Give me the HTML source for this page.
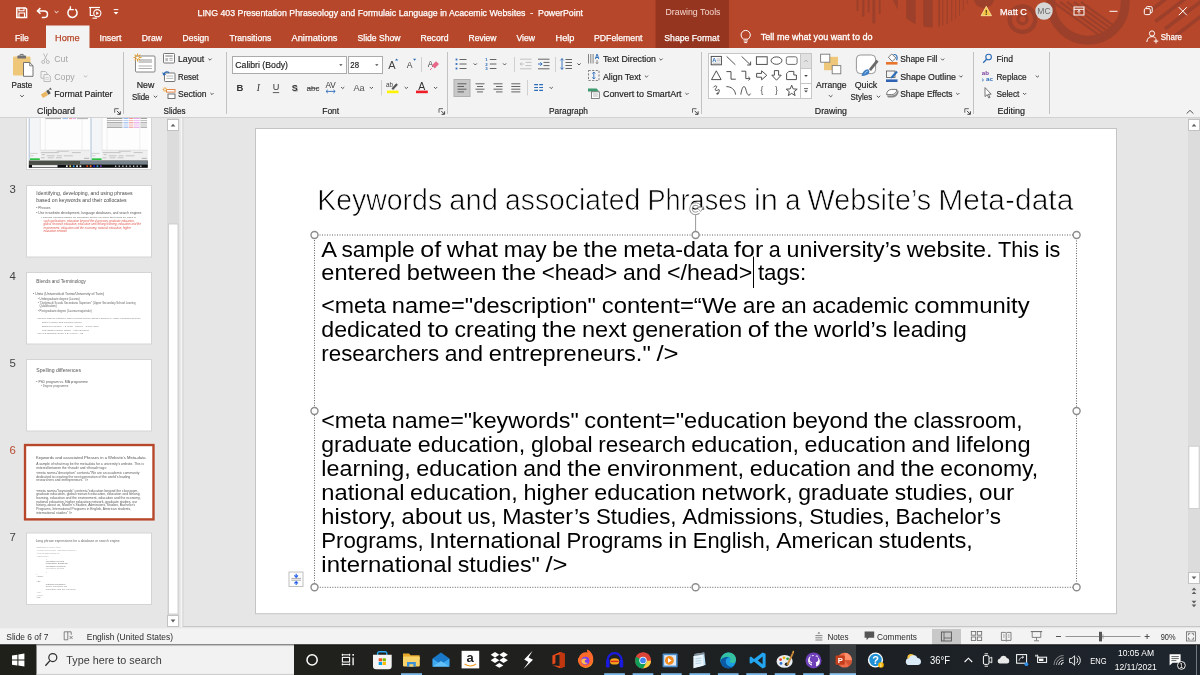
<!DOCTYPE html>
<html lang="en">
<head>
<meta charset="utf-8">
<title>LING 403 Presentation Phraseology and Formulaic Language in Acacemic Websites - PowerPoint</title>
<style>
html,body{margin:0;padding:0;background:#e6e6e6;overflow:hidden}
body{width:1200px;height:675px;position:relative;font-family:'Liberation Sans', sans-serif}
#app{position:absolute;left:0;top:0;width:1200px;height:675px;overflow:hidden;background:#e6e6e6}
svg{position:absolute;left:0;top:0;display:block;will-change:transform}
svg text{font-family:'Liberation Sans', sans-serif;white-space:pre}
</style>
</head>
<body>
<div id="app">
<svg width="1200" height="675" viewBox="0 0 1200 675">
<g id="titlebar" >
<rect x="0" y="0" width="1200" height="48" fill="#b7472a" />
<g id="pattern">
<clipPath id="cpTitle"><rect x="0" y="0" width="1200" height="48"/></clipPath>
<g clip-path="url(#cpTitle)">
<rect x="856.5" y="0" width="2" height="11" fill="#9c402b"/>
<rect x="862.0999999999999" y="0" width="2.4" height="16.7" fill="#9c402b"/>
<rect x="867.7" y="0" width="2" height="12.5" fill="#9c402b"/>
<rect x="872.3" y="0" width="3" height="23.3" fill="#9c402b"/>
<rect x="878.7" y="0" width="2" height="14" fill="#9c402b"/>
<path d="M893,0 h4.8 v10 z" fill="#9c402b"/>
<path d="M906.2,0 h9.5 v24.5 l-9.5,-6 z" fill="#9c402b"/>
<path d="M923.2,0 h9.5 v27.5 q-5,0 -9.5,-1.2 z" fill="#9c402b"/>
<rect x="938.3" y="0" width="1.7" height="26.5" fill="#9c402b"/>
<rect x="942.2" y="0" width="1.1" height="25.5" fill="#9c402b"/>
<rect x="946.5" y="0" width="1.3" height="24" fill="#9c402b"/>
<rect x="951.2" y="0" width="1.1" height="21.5" fill="#9c402b"/>
<rect x="955.2" y="0" width="0.9" height="19" fill="#9c402b"/>
<rect x="959" y="0" width="1.0" height="15.5" fill="#9c402b"/>
<rect x="962.8" y="0" width="1.0" height="10.5" fill="#9c402b"/>
<rect x="966.8" y="0" width="0.8" height="4" fill="#9c402b"/>
<circle cx="984" cy="-2" r="10.2" fill="#9c402b"/>
<circle cx="1022.5" cy="19.2" r="12.8" fill="none" stroke="#9c402b" stroke-width="4.4"/>
<circle cx="1022.5" cy="19.2" r="4.6" fill="none" stroke="#9c402b" stroke-width="3.2"/>
<circle cx="1088" cy="3" r="37.2" fill="none" stroke="#9c402b" stroke-width="9"/>
<clipPath id="cpRing"><circle cx="1088" cy="3" r="33"/></clipPath>
<g clip-path="url(#cpRing)" stroke="#9c402b" stroke-width="2.3">
<line x1="1053.0" y1="2" x2="1098.0" y2="34.4"/>
<line x1="1060.0" y1="2" x2="1105.0" y2="34.4"/>
<line x1="1067.0" y1="2" x2="1112.0" y2="34.4"/>
<line x1="1074.0" y1="2" x2="1119.0" y2="34.4"/>
<line x1="1081.0" y1="2" x2="1126.0" y2="34.4"/>
</g>
<g stroke="#9c402b" stroke-width="3.6">
<line x1="1146.0" y1="14.0" x2="1206.0" y2="-32.0"/>
<line x1="1155.5" y1="21.5" x2="1215.5" y2="-24.5"/>
<line x1="1165.0" y1="29.0" x2="1225.0" y2="-17.0"/>
<line x1="1174.5" y1="36.5" x2="1234.5" y2="-9.5"/>
</g>
</g></g>
<rect x="655.5" y="0" width="73.5" height="48" fill="#96351f" />
<rect x="46" y="25.5" width="43.5" height="22.5" fill="#f3f3f3" />
<path d="M16.8,7.9 h8.6 l1.2,1.2 v8.4 h-9.8 z" fill="none" stroke="#ffffff" stroke-width="1.5" />
<path d="M19,7.5 v3.2 h5 v-3.2" fill="none" stroke="#ffffff" stroke-width="1.1" />
<rect x="19" y="13" width="5.5" height="4.5" fill="none" stroke="#ffffff" stroke-width="1.1" />
<path d="M40.4,8 l-2.9,3 l3,2.7" fill="none" stroke="#ffffff" stroke-width="1.5" />
<path d="M37.8,11 h6.4 a3.3,3.3 0 0 1 0,6.6 h-2.4" fill="none" stroke="#ffffff" stroke-width="1.5" />
<path d="M54.7,11.1 L56.5,12.9 L58.3,11.1" fill="none" stroke="#ffffff" stroke-width="1" />
<path d="M75.3,9.2 a4.6,4.6 0 1 1 -5.2,-0.3" fill="none" stroke="#ffffff" stroke-width="1.5" />
<path d="M70.4,6.2 v3.4 h3.4" fill="none" stroke="#ffffff" stroke-width="1.3" />
<path d="M89,7.5 h11" fill="none" stroke="#ffffff" stroke-width="1.2" />
<path d="M90.3,7.5 v8 h3.2" fill="none" stroke="#ffffff" stroke-width="1.2" />
<circle cx="97.3" cy="13.2" r="3.6" fill="none" stroke="#ffffff" stroke-width="1.1" />
<path d="M96.2,11.4 l2.8,1.8 l-2.8,1.8 z" fill="#ffffff" />
<path d="M92.5,18.2 h4.5" fill="none" stroke="#ffffff" stroke-width="1.1" />
<path d="M113.7,9.6 h4.6" fill="none" stroke="#ffffff" stroke-width="1" />
<path d="M113.6,12 l2.4,2.4 l2.4,-2.4 z" fill="#ffffff" />
<text x="197.5" y="16.3" font-size="9.0" fill="#ffffff" textLength="385.5" lengthAdjust="spacingAndGlyphs" stroke="#ffffff" stroke-width="0.25" >LING 403 Presentation Phraseology and Formulaic Language in Acacemic Websites  -  PowerPoint</text>
<text x="665.5" y="15.3" font-size="9.0" fill="#f3d6cd" textLength="55.0" lengthAdjust="spacingAndGlyphs" >Drawing Tools</text>
<path d="M986.3,6.3 l5.2,9.4 h-10.4 z" fill="#f6c443" stroke="#fbe7a9" stroke-width="0.8" />
<text x="986.3" y="14.6" font-size="7.5" fill="#3b2a10" font-weight="bold" text-anchor="middle" >!</text>
<text x="1000" y="15.3" font-size="9.6" fill="#ffffff" textLength="26.8" lengthAdjust="spacingAndGlyphs" stroke="#ffffff" stroke-width="0.25" >Matt C</text>
<circle cx="1044" cy="11" r="8.7" fill="#d6d6d6" />
<text x="1044" y="14.4" font-size="8.6" fill="#6a6a6a" text-anchor="middle" >MC</text>
<rect x="1074" y="7" width="10" height="8" fill="none" stroke="#ffffff" stroke-width="1" />
<path d="M1074,9.3 h10" fill="none" stroke="#ffffff" stroke-width="1" />
<path d="M1079,13.6 v-3 M1077.4,11.8 l1.6,-1.5 l1.6,1.5" fill="none" stroke="#ffffff" stroke-width="0.9" />
<path d="M1109.5,11.3 h8" fill="none" stroke="#ffffff" stroke-width="1" />
<rect x="1144.3" y="8.6" width="6" height="6" fill="none" stroke="#ffffff" stroke-width="1" rx="1.3" />
<path d="M1146.2,8.4 v-0.6 a1.2,1.2 0 0 1 1.2,-1.2 h3.4 a1.4,1.4 0 0 1 1.4,1.4 v3.6 a1.2,1.2 0 0 1 -1.2,1.2 h-0.6" fill="none" stroke="#ffffff" stroke-width="1" />
<path d="M1178.8,7.2 l8,8 M1186.8,7.2 l-8,8" fill="none" stroke="#ffffff" stroke-width="1" />
</g>
<g id="tabs" >
<text x="15" y="40.6" font-size="9.0" fill="#ffffff" textLength="13.8" lengthAdjust="spacingAndGlyphs" stroke="#ffffff" stroke-width="0.25" >File</text>
<text x="99.5" y="40.6" font-size="9.0" fill="#ffffff" textLength="22.0" lengthAdjust="spacingAndGlyphs" stroke="#ffffff" stroke-width="0.25" >Insert</text>
<text x="141.8" y="40.6" font-size="9.0" fill="#ffffff" textLength="20.2" lengthAdjust="spacingAndGlyphs" stroke="#ffffff" stroke-width="0.25" >Draw</text>
<text x="182.5" y="40.6" font-size="9.0" fill="#ffffff" textLength="26.5" lengthAdjust="spacingAndGlyphs" stroke="#ffffff" stroke-width="0.25" >Design</text>
<text x="229.5" y="40.6" font-size="9.0" fill="#ffffff" textLength="41.8" lengthAdjust="spacingAndGlyphs" stroke="#ffffff" stroke-width="0.25" >Transitions</text>
<text x="291.5" y="40.6" font-size="9.0" fill="#ffffff" textLength="46.0" lengthAdjust="spacingAndGlyphs" stroke="#ffffff" stroke-width="0.25" >Animations</text>
<text x="357.5" y="40.6" font-size="9.0" fill="#ffffff" textLength="43.0" lengthAdjust="spacingAndGlyphs" stroke="#ffffff" stroke-width="0.25" >Slide Show</text>
<text x="420.5" y="40.6" font-size="9.0" fill="#ffffff" textLength="28.0" lengthAdjust="spacingAndGlyphs" stroke="#ffffff" stroke-width="0.25" >Record</text>
<text x="468.5" y="40.6" font-size="9.0" fill="#ffffff" textLength="28.0" lengthAdjust="spacingAndGlyphs" stroke="#ffffff" stroke-width="0.25" >Review</text>
<text x="516.5" y="40.6" font-size="9.0" fill="#ffffff" textLength="18.5" lengthAdjust="spacingAndGlyphs" stroke="#ffffff" stroke-width="0.25" >View</text>
<text x="555.5" y="40.6" font-size="9.0" fill="#ffffff" textLength="19.0" lengthAdjust="spacingAndGlyphs" stroke="#ffffff" stroke-width="0.25" >Help</text>
<text x="594" y="40.6" font-size="9.0" fill="#ffffff" textLength="48.5" lengthAdjust="spacingAndGlyphs" stroke="#ffffff" stroke-width="0.25" >PDFelement</text>
<text x="664.3" y="40.6" font-size="9.0" fill="#ffffff" textLength="55.0" lengthAdjust="spacingAndGlyphs" stroke="#ffffff" stroke-width="0.25" >Shape Format</text>
<text x="55" y="40.6" font-size="9.0" fill="#b7472a" textLength="24.5" lengthAdjust="spacingAndGlyphs" stroke="#b7472a" stroke-width="0.25" >Home</text>
<path d="M743.4,39.2 c-1.6,-1.6 -2.3,-2.6 -2.3,-4.2 a4.6,4.6 0 0 1 9.2,0 c0,1.6 -0.7,2.6 -2.3,4.2 z" fill="none" stroke="#ffffff" stroke-width="1" />
<path d="M743.6,41 h4.2 M744.3,42.6 h2.8" fill="none" stroke="#ffffff" stroke-width="1" />
<text x="760.8" y="40.4" font-size="9.0" fill="#ffffff" textLength="111.7" lengthAdjust="spacingAndGlyphs" stroke="#ffffff" stroke-width="0.3" >Tell me what you want to do</text>
<circle cx="1152" cy="33.5" r="2.6" fill="none" stroke="#ffffff" stroke-width="1" />
<path d="M1146.8,42 c0.3,-3.6 2.4,-5.4 5.2,-5.4 c1.6,0 2.9,0.6 3.8,1.7" fill="none" stroke="#ffffff" stroke-width="1" />
<path d="M1156,38.8 v4.6 M1153.7,41.1 h4.6" fill="none" stroke="#ffffff" stroke-width="1" />
<text x="1160.8" y="40.4" font-size="9.0" fill="#ffffff" textLength="21.2" lengthAdjust="spacingAndGlyphs" stroke="#ffffff" stroke-width="0.25" >Share</text>
</g>
<g id="ribbon" >
<rect x="0" y="48" width="1200" height="69" fill="#f3f3f3" />
<line x1="0" y1="117.5" x2="1200" y2="117.5" stroke="#d2d2d2" stroke-width="1" />
<line x1="123.5" y1="52" x2="123.5" y2="114" stroke="#c2c2c2" stroke-width="1" />
<line x1="226.5" y1="52" x2="226.5" y2="114" stroke="#c2c2c2" stroke-width="1" />
<line x1="447.5" y1="52" x2="447.5" y2="114" stroke="#c2c2c2" stroke-width="1" />
<line x1="701.5" y1="52" x2="701.5" y2="114" stroke="#c2c2c2" stroke-width="1" />
<line x1="973.5" y1="52" x2="973.5" y2="114" stroke="#c2c2c2" stroke-width="1" />
<line x1="1049.5" y1="52" x2="1049.5" y2="114" stroke="#c2c2c2" stroke-width="1" />
<path d="M114.7,112.7 v-4 h4" fill="none" stroke="#555" stroke-width="0.9" />
<path d="M116.9,110.9 l3.2,3.2 M120.3,111.3 v3 h-3" fill="none" stroke="#444" stroke-width="1" />
<path d="M439.0,112.7 v-4 h4" fill="none" stroke="#555" stroke-width="0.9" />
<path d="M441.2,110.9 l3.2,3.2 M444.6,111.3 v3 h-3" fill="none" stroke="#444" stroke-width="1" />
<path d="M692.5,112.7 v-4 h4" fill="none" stroke="#555" stroke-width="0.9" />
<path d="M694.6999999999999,110.9 l3.2,3.2 M698.0999999999999,111.3 v3 h-3" fill="none" stroke="#444" stroke-width="1" />
<path d="M964.8000000000001,112.7 v-4 h4" fill="none" stroke="#555" stroke-width="0.9" />
<path d="M967.0,110.9 l3.2,3.2 M970.4,111.3 v3 h-3" fill="none" stroke="#444" stroke-width="1" />
<rect x="13" y="56.5" width="17.5" height="19" fill="#efc77a" stroke="none" stroke-width="0" rx="1.2" />
<rect x="17.4" y="55.6" width="8.6" height="3" fill="#707070" stroke="none" stroke-width="0" rx="0.6" />
<path d="M20.2,55.6 v-1.2 h3 v1.2" fill="none" stroke="#707070" stroke-width="1" />
<path d="M23.5,62.5 h6.2 l3.3,3.3 v10.5 h-9.5 z" fill="#fff" stroke="#666" stroke-width="0.9" />
<path d="M29.7,62.5 v3.3 h3.3" fill="none" stroke="#666" stroke-width="0.8" />
<text x="11.5" y="87.5" font-size="9.0" fill="#1f1f1f" textLength="20.7" lengthAdjust="spacingAndGlyphs" stroke="#1f1f1f" stroke-width="0.18" >Paste</text>
<path d="M20.2,95.1 L22,96.9 L23.8,95.1" fill="none" stroke="#444" stroke-width="0.9" />
<path d="M43.5,53.5 l3.6,7.2 M47.5,53.5 l-3.6,7.2" fill="none" stroke="#b5b5b5" stroke-width="0.9" />
<circle cx="43.2" cy="62" r="1.5" fill="none" stroke="#b5b5b5" stroke-width="0.9" />
<circle cx="47.8" cy="62" r="1.5" fill="none" stroke="#b5b5b5" stroke-width="0.9" />
<text x="54.2" y="62.3" font-size="9.0" fill="#a6a6a6" textLength="13.8" lengthAdjust="spacingAndGlyphs" >Cut</text>
<path d="M41,71.5 h4.5 l1.5,1.5 v5.2 h-6 z" fill="#f3f3f3" stroke="#b5b5b5" stroke-width="0.9" />
<path d="M44,74.5 h4.5 l1.8,1.8 v5.2 h-6.3 z" fill="#f3f3f3" stroke="#b5b5b5" stroke-width="0.9" />
<path d="M45.3,77.5 h3.6 M45.3,79.3 h3.6" fill="none" stroke="#c5c5c5" stroke-width="0.7" />
<text x="54.2" y="79.5" font-size="9.0" fill="#a6a6a6" textLength="20.6" lengthAdjust="spacingAndGlyphs" >Copy</text>
<path d="M83.9,75.5 L85.5,77.1 L87.1,75.5" fill="none" stroke="#b0b0b0" stroke-width="0.9" />
<path d="M40.8,94.5 l5.2,-3.2 l2.2,3.6 l-5.2,3.2 z" fill="#e9b763" />
<path d="M46.2,91 l2.2,-1.4 l2.3,3.7 l-2.2,1.4 z" fill="#555" />
<path d="M48.8,89.4 l1.6,-2 l1.5,2.3 z" fill="#555" />
<text x="54.2" y="96.7" font-size="9.0" fill="#1f1f1f" textLength="58.3" lengthAdjust="spacingAndGlyphs" stroke="#1f1f1f" stroke-width="0.18" >Format Painter</text>
<text x="37" y="114.1" font-size="9.0" fill="#1f1f1f" textLength="38" lengthAdjust="spacingAndGlyphs" stroke="#1f1f1f" stroke-width="0.18" >Clipboard</text>
<rect x="135.5" y="56" width="19.5" height="16" fill="#fff" stroke="#777" stroke-width="0.9" rx="1" />
<rect x="138.5" y="59" width="13.5" height="4" fill="#c9c9c9" />
<path d="M138.5,66 h13.5 M138.5,68.5 h13.5" fill="none" stroke="#9a9a9a" stroke-width="0.8" />
<g stroke="#e8a33a" stroke-width="1.1">
<line x1="137.50" y1="56.20" x2="137.50" y2="53.50"/>
<line x1="138.41" y1="56.59" x2="140.30" y2="54.70"/>
<line x1="138.80" y1="57.50" x2="141.50" y2="57.50"/>
<line x1="138.41" y1="58.41" x2="140.30" y2="60.30"/>
<line x1="137.50" y1="58.80" x2="137.50" y2="61.50"/>
<line x1="136.59" y1="58.41" x2="134.70" y2="60.30"/>
<line x1="136.20" y1="57.50" x2="133.50" y2="57.50"/>
<line x1="136.59" y1="56.59" x2="134.70" y2="54.70"/>
</g>
<text x="136.7" y="87.5" font-size="9.0" fill="#1f1f1f" textLength="17.6" lengthAdjust="spacingAndGlyphs" stroke="#1f1f1f" stroke-width="0.18" >New</text>
<text x="132" y="99.6" font-size="9.0" fill="#1f1f1f" textLength="17.5" lengthAdjust="spacingAndGlyphs" stroke="#1f1f1f" stroke-width="0.18" >Slide</text>
<path d="M153.8,95.75 L155.5,97.44999999999999 L157.2,95.75" fill="none" stroke="#444" stroke-width="0.9" />
<rect x="163.5" y="53.5" width="11" height="9.5" fill="#fff" stroke="#666" stroke-width="0.9" rx="0.8" />
<path d="M165.3,56 h7.4" fill="none" stroke="#666" stroke-width="0.9" />
<rect x="165.3" y="58" width="2.8" height="3.2" fill="#bdbdbd" />
<path d="M169.3,58.4 h3.4 M169.3,60.2 h3.4" fill="none" stroke="#888" stroke-width="0.7" />
<text x="178" y="62.3" font-size="9.0" fill="#1f1f1f" textLength="26.2" lengthAdjust="spacingAndGlyphs" stroke="#1f1f1f" stroke-width="0.18" >Layout</text>
<path d="M208.4,58.6 L210,60.199999999999996 L211.6,58.6" fill="none" stroke="#444" stroke-width="0.9" />
<rect x="164.5" y="73" width="10.5" height="8.5" fill="#fff" stroke="#666" stroke-width="0.9" rx="0.8" />
<path d="M166.3,76 h7 M166.3,78.4 h7" fill="none" stroke="#999" stroke-width="0.7" />
<path d="M163.6,74.8 a3.3,3.3 0 0 1 5.5,-2" fill="none" stroke="#2b6cb8" stroke-width="1.2" />
<path d="M162.2,72.3 l1,3.3 l3.2,-1 z" fill="#2b6cb8" />
<text x="178" y="79.5" font-size="9.0" fill="#1f1f1f" textLength="20.5" lengthAdjust="spacingAndGlyphs" stroke="#1f1f1f" stroke-width="0.18" >Reset</text>
<rect x="166.5" y="89.5" width="8.5" height="2.6" fill="#fff" stroke="#e07b39" stroke-width="0.9" />
<rect x="168" y="94" width="7" height="4.5" fill="#fff" stroke="#666" stroke-width="0.9" />
<g stroke="#e8a33a" stroke-width="0.9">
<line x1="165.00" y1="88.70" x2="165.00" y2="87.10"/>
<line x1="165.56" y1="88.94" x2="166.68" y2="87.82"/>
<line x1="165.80" y1="89.50" x2="167.40" y2="89.50"/>
<line x1="165.56" y1="90.06" x2="166.68" y2="91.18"/>
<line x1="165.00" y1="90.30" x2="165.00" y2="91.90"/>
<line x1="164.44" y1="90.06" x2="163.32" y2="91.18"/>
<line x1="164.20" y1="89.50" x2="162.60" y2="89.50"/>
<line x1="164.44" y1="88.94" x2="163.32" y2="87.82"/>
</g>
<text x="178" y="96.7" font-size="9.0" fill="#1f1f1f" textLength="28.6" lengthAdjust="spacingAndGlyphs" stroke="#1f1f1f" stroke-width="0.18" >Section</text>
<path d="M210.4,93.0 L212,94.6 L213.6,93.0" fill="none" stroke="#444" stroke-width="0.9" />
<text x="163.5" y="114.1" font-size="9.0" fill="#1f1f1f" textLength="22.0" lengthAdjust="spacingAndGlyphs" stroke="#1f1f1f" stroke-width="0.18" >Slides</text>
<rect x="232.5" y="56.5" width="114" height="17" fill="#fff" stroke="#ababab" stroke-width="1" />
<text x="235.3" y="67.8" font-size="9.0" fill="#1f1f1f" textLength="52.7" lengthAdjust="spacingAndGlyphs" stroke="#1f1f1f" stroke-width="0.18" >Calibri (Body)</text>
<path d="M339.2,64.2 h3.4 l-1.7,1.9 z" fill="#444" />
<rect x="348.5" y="56.5" width="34" height="17" fill="#fff" stroke="#ababab" stroke-width="1" />
<text x="350.3" y="67.8" font-size="9.0" fill="#1f1f1f" textLength="8.7" lengthAdjust="spacingAndGlyphs" stroke="#1f1f1f" stroke-width="0.18" >28</text>
<path d="M375.1,64.2 h3.4 l-1.7,1.9 z" fill="#444" />
<text x="392" y="68.6" font-size="11" fill="#444" text-anchor="middle" >A</text>
<path d="M395,60.5 l1.6,-2 l1.6,2 z" fill="#2b6cb8" />
<text x="409.5" y="68.4" font-size="8.6" fill="#444" text-anchor="middle" >A</text>
<path d="M413,58.8 l1.6,2 l1.6,-2 z" fill="#2b6cb8" />
<line x1="421.5" y1="57" x2="421.5" y2="72" stroke="#d0d0d0" stroke-width="1" />
<text x="430.6" y="66.5" font-size="8.2" fill="#444" text-anchor="middle" >A</text>
<path d="M431.8,65.6 l4.2,-4.4 l3,2.8 l-4.2,4.4 z" fill="#e8688a" />
<path d="M430,70 l1.8,-1.8" fill="none" stroke="#e8688a" stroke-width="1" />
<text x="240" y="91" font-size="9.5" fill="#333" font-weight="bold" text-anchor="middle" >B</text>
<text x="258.3" y="91" font-size="9.5" fill="#333" text-anchor="middle" font-style="italic" style="font-family:'Liberation Serif', serif" >I</text>
<text x="276" y="90.4" font-size="9.2" fill="#333" text-anchor="middle" >U</text>
<path d="M272.8,92.6 h6.4" fill="none" stroke="#333" stroke-width="0.8" />
<text x="295.5" y="91.6" font-size="9" fill="#bdbdbd" font-weight="bold" text-anchor="middle" >S</text>
<text x="294.7" y="90.8" font-size="9" fill="#333" font-weight="bold" text-anchor="middle" >S</text>
<text x="313" y="90.6" font-size="8" fill="#333" text-anchor="middle" >abc</text>
<path d="M307.2,88.2 h11.6" fill="none" stroke="#333" stroke-width="0.7" />
<text x="330.6" y="88.2" font-size="8.2" fill="#333" text-anchor="middle" >AV</text>
<path d="M326.2,91.4 h8.8 M327.8,89.8 l-1.8,1.6 l1.8,1.6 M333.4,89.8 l1.8,1.6 l-1.8,1.6" fill="none" stroke="#2b6cb8" stroke-width="0.9" />
<path d="M341.09999999999997,87.0 L342.7,88.6 L344.3,87.0" fill="none" stroke="#444" stroke-width="0.9" />
<text x="359" y="90.8" font-size="9.2" fill="#555" text-anchor="middle" >Aa</text>
<path d="M369.79999999999995,87.0 L371.4,88.6 L373.0,87.0" fill="none" stroke="#444" stroke-width="0.9" />
<line x1="381.5" y1="80" x2="381.5" y2="95.5" stroke="#d0d0d0" stroke-width="1" />
<text x="389.6" y="86.6" font-size="6.4" fill="#444" text-anchor="middle" >ab</text>
<path d="M391.5,88.4 l4.8,-5.2 l1.6,1.5 l-4.8,5.2 z" fill="#555" />
<rect x="387" y="90.6" width="11.5" height="2.6" fill="#fff200" />
<path d="M404.7,87.0 L406.3,88.6 L407.90000000000003,87.0" fill="none" stroke="#444" stroke-width="0.9" />
<text x="421.8" y="89.6" font-size="10.5" fill="#333" text-anchor="middle" >A</text>
<rect x="416" y="90.6" width="11.8" height="2.6" fill="#ee1c25" />
<path d="M434.0,87.0 L435.6,88.6 L437.20000000000005,87.0" fill="none" stroke="#444" stroke-width="0.9" />
<text x="322.2" y="114.1" font-size="9.0" fill="#1f1f1f" textLength="17.0" lengthAdjust="spacingAndGlyphs" stroke="#1f1f1f" stroke-width="0.18" >Font</text>
<rect x="455.6" y="58.6" width="1.8" height="1.8" fill="#2b6cb8" />
<path d="M459.5,59.5 h7" fill="none" stroke="#555" stroke-width="0.9" />
<rect x="455.6" y="63.1" width="1.8" height="1.8" fill="#2b6cb8" />
<path d="M459.5,64 h7" fill="none" stroke="#555" stroke-width="0.9" />
<rect x="455.6" y="67.6" width="1.8" height="1.8" fill="#2b6cb8" />
<path d="M459.5,68.5 h7" fill="none" stroke="#555" stroke-width="0.9" />
<path d="M473.7,63.400000000000006 L475.3,65.0 L476.90000000000003,63.400000000000006" fill="none" stroke="#444" stroke-width="0.9" />
<text x="486.6" y="61.1" font-size="4.4" fill="#2b6cb8" font-weight="bold" text-anchor="middle" >1</text>
<path d="M489.8,59.5 h6.6" fill="none" stroke="#555" stroke-width="0.9" />
<text x="486.6" y="65.6" font-size="4.4" fill="#2b6cb8" font-weight="bold" text-anchor="middle" >2</text>
<path d="M489.8,64 h6.6" fill="none" stroke="#555" stroke-width="0.9" />
<text x="486.6" y="70.1" font-size="4.4" fill="#2b6cb8" font-weight="bold" text-anchor="middle" >3</text>
<path d="M489.8,68.5 h6.6" fill="none" stroke="#555" stroke-width="0.9" />
<path d="M503.0,63.400000000000006 L504.6,65.0 L506.20000000000005,63.400000000000006" fill="none" stroke="#444" stroke-width="0.9" />
<line x1="514.5" y1="57" x2="514.5" y2="72" stroke="#d0d0d0" stroke-width="1" />
<path d="M520,59.2 h11.5" fill="none" stroke="#bbb" stroke-width="0.9" />
<path d="M520,68.8 h11.5" fill="none" stroke="#bbb" stroke-width="0.9" />
<path d="M525.5,62.4 h6" fill="none" stroke="#bbb" stroke-width="0.9" />
<path d="M525.5,65.6 h6" fill="none" stroke="#bbb" stroke-width="0.9" />
<path d="M520,64 h4 M521.6,62.4 l-1.7,1.6 l1.7,1.6" fill="none" stroke="#bbb" stroke-width="0.9" />
<path d="M538,59.2 h11.5" fill="none" stroke="#555" stroke-width="0.9" />
<path d="M538,68.8 h11.5" fill="none" stroke="#555" stroke-width="0.9" />
<path d="M543.5,62.4 h6" fill="none" stroke="#555" stroke-width="0.9" />
<path d="M543.5,65.6 h6" fill="none" stroke="#555" stroke-width="0.9" />
<path d="M538,64 h4 M540.4,62.4 l1.7,1.6 l-1.7,1.6" fill="none" stroke="#2b6cb8" stroke-width="1" />
<line x1="555.5" y1="57" x2="555.5" y2="72" stroke="#d0d0d0" stroke-width="1" />
<path d="M565.5,59.5 h6.5" fill="none" stroke="#555" stroke-width="0.9" />
<path d="M565.5,62.5 h6.5" fill="none" stroke="#555" stroke-width="0.9" />
<path d="M565.5,65.5 h6.5" fill="none" stroke="#555" stroke-width="0.9" />
<path d="M565.5,68.5 h6.5" fill="none" stroke="#555" stroke-width="0.9" />
<path d="M562,58.6 v10.8 M560.4,60.4 l1.6,-1.8 l1.6,1.8 M560.4,67.6 l1.6,1.8 l1.6,-1.8" fill="none" stroke="#2b6cb8" stroke-width="0.9" />
<path d="M577.4,63.400000000000006 L579,65.0 L580.6,63.400000000000006" fill="none" stroke="#444" stroke-width="0.9" />
<rect x="454" y="79.5" width="16" height="17" fill="#c8c8c8" stroke="#b0b0b0" stroke-width="1" />
<path d="M457.5,83.8 h9" fill="none" stroke="#555" stroke-width="0.9" />
<path d="M457.5,86.5 h6.5" fill="none" stroke="#555" stroke-width="0.9" />
<path d="M457.5,89.2 h9" fill="none" stroke="#555" stroke-width="0.9" />
<path d="M457.5,91.9 h6.5" fill="none" stroke="#555" stroke-width="0.9" />
<path d="M475.5,83.8 h9" fill="none" stroke="#555" stroke-width="0.9" />
<path d="M477.0,86.5 h6" fill="none" stroke="#555" stroke-width="0.9" />
<path d="M475.5,89.2 h9" fill="none" stroke="#555" stroke-width="0.9" />
<path d="M477.0,91.9 h6" fill="none" stroke="#555" stroke-width="0.9" />
<path d="M493.5,83.8 h9" fill="none" stroke="#555" stroke-width="0.9" />
<path d="M496.0,86.5 h6.5" fill="none" stroke="#555" stroke-width="0.9" />
<path d="M493.5,89.2 h9" fill="none" stroke="#555" stroke-width="0.9" />
<path d="M496.0,91.9 h6.5" fill="none" stroke="#555" stroke-width="0.9" />
<path d="M511.3,83.8 h9" fill="none" stroke="#555" stroke-width="0.9" />
<path d="M511.3,86.5 h9" fill="none" stroke="#555" stroke-width="0.9" />
<path d="M511.3,89.2 h9" fill="none" stroke="#555" stroke-width="0.9" />
<path d="M511.3,91.9 h9" fill="none" stroke="#555" stroke-width="0.9" />
<line x1="527.5" y1="80" x2="527.5" y2="95.5" stroke="#d0d0d0" stroke-width="1" />
<path d="M534.2,84.6 h3.8 M539.2,84.6 h3.8" fill="none" stroke="#2b6cb8" stroke-width="1.2" />
<path d="M534.2,87.5 h3.8 M539.2,87.5 h3.8" fill="none" stroke="#2b6cb8" stroke-width="1.2" />
<path d="M534.2,90.39999999999999 h3.8 M539.2,90.39999999999999 h3.8" fill="none" stroke="#2b6cb8" stroke-width="1.2" />
<path d="M549.6,87.0 L551.2,88.6 L552.8000000000001,87.0" fill="none" stroke="#444" stroke-width="0.9" />
<path d="M588.5,54 v9.5 M590.8,54 v9.5 M593.1,54 v9.5" fill="none" stroke="#666" stroke-width="0.8" />
<text x="597" y="59" font-size="6.5" fill="#2b6cb8" font-weight="bold" text-anchor="middle" >A</text>
<path d="M597,60 v3.6 M595.8,62.4 l1.2,1.4 l1.2,-1.4" fill="none" stroke="#666" stroke-width="0.7" />
<text x="603" y="62.3" font-size="9.0" fill="#1f1f1f" textLength="53" lengthAdjust="spacingAndGlyphs" stroke="#1f1f1f" stroke-width="0.18" >Text Direction</text>
<path d="M659.4,58.6 L661,60.199999999999996 L662.6,58.6" fill="none" stroke="#444" stroke-width="0.9" />
<rect x="588.5" y="70.5" width="10.5" height="10" fill="none" stroke="#666" stroke-width="0.8" stroke-dasharray="2.2,1.4"/>
<path d="M593.8,72 v7 M592.4,73.6 l1.4,-1.6 l1.4,1.6 M592.4,77.4 l1.4,1.6 l1.4,-1.6" fill="none" stroke="#2b6cb8" stroke-width="0.9" />
<text x="603" y="79.5" font-size="9.0" fill="#1f1f1f" textLength="38" lengthAdjust="spacingAndGlyphs" stroke="#1f1f1f" stroke-width="0.18" >Align Text</text>
<path d="M644.9,75.60000000000001 L646.5,77.2 L648.1,75.60000000000001" fill="none" stroke="#444" stroke-width="0.9" />
<path d="M588,88.6 h8.6 l2.6,3 h-11.2 z" fill="#3c9a6e" />
<rect x="591.5" y="91.8" width="7.8" height="6.6" fill="#fff" stroke="#666" stroke-width="0.8" />
<path d="M593,94 h4.8 M593,96 h4.8" fill="none" stroke="#999" stroke-width="0.7" />
<text x="603" y="96.7" font-size="9.0" fill="#1f1f1f" textLength="78.6" lengthAdjust="spacingAndGlyphs" stroke="#1f1f1f" stroke-width="0.18" >Convert to SmartArt</text>
<path d="M685.4,93.0 L687,94.6 L688.6,93.0" fill="none" stroke="#444" stroke-width="0.9" />
<text x="549" y="114.1" font-size="9.0" fill="#1f1f1f" textLength="39" lengthAdjust="spacingAndGlyphs" stroke="#1f1f1f" stroke-width="0.18" >Paragraph</text>
<rect x="708.5" y="53.5" width="103" height="45" fill="#fff" stroke="#c6c6c6" stroke-width="1" />
<rect x="801" y="54" width="10" height="14.5" fill="#e1e1e1" />
<line x1="800.5" y1="54" x2="800.5" y2="98" stroke="#c6c6c6" stroke-width="1" />
<line x1="801" y1="68.5" x2="811" y2="68.5" stroke="#c6c6c6" stroke-width="1" />
<line x1="801" y1="83.5" x2="811" y2="83.5" stroke="#c6c6c6" stroke-width="1" />
<path d="M804.200,62 l1.800,-1.900 l1.800,1.900" fill="none" stroke="#b0b0b0" stroke-width="0.9" />
<path d="M804.2,75 h3.6 l-1.8,2 z" fill="#444" />
<path d="M804,88.6 h4" fill="none" stroke="#444" stroke-width="0.8" />
<path d="M804.2,90.4 h3.6 l-1.8,2 z" fill="#444" />
<rect x="711.2" y="56.4" width="10.2" height="8.4" fill="#fff" stroke="#484848" stroke-width="0.95" />
<text x="714.3" y="62" font-size="5.5" fill="#2b6cb8" font-weight="bold" text-anchor="middle" >A</text>
<path d="M716.5,59 h3.8 M716.5,60.8 h3.8 M712.6,63.2 h7.6" fill="none" stroke="#888" stroke-width="0.6" />
<path d="M726.6,56.4 l8.8,8.4" fill="none" stroke="#484848" stroke-width="0.95" />
<path d="M741.6,56.4 l8.6,8.2 M750.6,61.6 v3.4 h-3.4" fill="none" stroke="#484848" stroke-width="0.95" />
<rect x="756.4" y="56.8" width="10.8" height="7.6" fill="none" stroke="#484848" stroke-width="0.95" />
<ellipse cx="776.5" cy="60.6" rx="5.4" ry="3.7" fill="none" stroke="#484848" stroke-width="0.95"/>
<rect x="786.3" y="56.8" width="10.8" height="7.6" fill="none" stroke="#484848" stroke-width="0.8" rx="1.8" />
<path d="M716.3,70.8 l4.8,8.8 h-9.6 z" fill="none" stroke="#484848" stroke-width="0.95" />
<path d="M726.4,71.6 h4.6 v7.6 h4.8" fill="none" stroke="#484848" stroke-width="0.95" />
<path d="M741.4,71.2 h4.4 v7.4 h4 M748.4,77 l1.8,1.7 l-1.8,1.7" fill="none" stroke="#484848" stroke-width="0.95" />
<path d="M756.6,73.4 h5 v-2.6 l5.2,4.5 l-5.2,4.5 v-2.6 h-5 z" fill="none" stroke="#484848" stroke-width="0.95" />
<path d="M774.4,70.6 h4.2 v4.6 h2.6 l-4.7,5 l-4.7,-5 h2.6 z" fill="none" stroke="#484848" stroke-width="0.95" />
<path d="M786.6,79.6 v-6 l2.2,-2.2 h5 v3.6 h2.6 v4.6 z" fill="none" stroke="#484848" stroke-width="0.95" />
<path d="M713.400,87.400 c2,-2.600 4.400,-1.600 2.600,0.800 c-2.400,3 1.600,2.600 2.400,1.400 c1.200,-1 1.200,2.400 -0.600,4.600 l-0.200,-1.800 M717.800,94.200 l-1.600,-0.600" fill="none" stroke="#484848" stroke-width="0.95" />
<path d="M726.4,86.6 c5,0 8.6,3 9.2,8" fill="none" stroke="#484848" stroke-width="0.95" />
<path d="M740.8,94.6 c1.6,-10 4,-10 5.4,-4 c1.4,6 3.6,5 4.4,3" fill="none" stroke="#484848" stroke-width="0.95" />
<text x="761.8" y="93.2" font-size="8.5" fill="#484848" text-anchor="middle" >{</text>
<text x="776.5" y="93.2" font-size="8.5" fill="#484848" text-anchor="middle" >}</text>
<path d="M791.7,85.2 l1.5,3.7 l4,0.3 l-3.1,2.5 l1,3.9 l-3.4,-2.2 l-3.4,2.2 l1,-3.9 l-3.1,-2.5 l4,-0.3 z" fill="none" stroke="#484848" stroke-width="0.95" />
<rect x="824" y="56.8" width="14" height="13.4" fill="#efc77a" />
<rect x="820.6" y="54.2" width="9.2" height="8" fill="#fff" stroke="#7a7a7a" stroke-width="0.9" />
<rect x="832.2" y="65.6" width="8.6" height="8.2" fill="#fff" stroke="#7a7a7a" stroke-width="0.9" />
<text x="816" y="87.5" font-size="9.0" fill="#1f1f1f" textLength="30.5" lengthAdjust="spacingAndGlyphs" stroke="#1f1f1f" stroke-width="0.18" >Arrange</text>
<path d="M828.9000000000001,95.1 L830.7,96.9 L832.5,95.1" fill="none" stroke="#444" stroke-width="0.9" />
<rect x="856.4" y="55" width="19.2" height="18.6" fill="#fff" stroke="#8a8a8a" stroke-width="0.9" rx="4" />
<path d="M868.8,69.2 l7.6,-9.4 l2.2,1.8 l-7.600,9.400 z" fill="#6a6a6a" />
<path d="M861.6,76 c0.800,-4 3,-6.600 6.400,-6.800 c2,1.400 1.800,4.400 -0.800,5.600 c-1.800,0.800 -3.800,1.200 -5.600,1.200 z" fill="#3f7fc4" />
<path d="M864.8,73.6 c0.600,-1.400 1.600,-2.200 2.800,-2.400" fill="none" stroke="#cfe2f5" stroke-width="0.8" />
<text x="854.7" y="87.5" font-size="9.0" fill="#1f1f1f" textLength="22.6" lengthAdjust="spacingAndGlyphs" stroke="#1f1f1f" stroke-width="0.18" >Quick</text>
<text x="850.5" y="99.6" font-size="9.0" fill="#1f1f1f" textLength="21.7" lengthAdjust="spacingAndGlyphs" stroke="#1f1f1f" stroke-width="0.18" >Styles</text>
<path d="M876.8,95.75 L878.5,97.44999999999999 L880.2,95.75" fill="none" stroke="#444" stroke-width="0.9" />
<path d="M888.4,57.2 l3.4,-3.2 l4,4 l-3.6,3.4 z" fill="#fff" stroke="#555" stroke-width="0.8" />
<path d="M893.6,54.6 c3,-0.600 4.400,2.400 3,5.600" fill="none" stroke="#2b6cb8" stroke-width="1.2" />
<rect x="886" y="62" width="11.5" height="2.6" fill="#e8742c" />
<text x="900.2" y="62.3" font-size="9.0" fill="#1f1f1f" textLength="37.3" lengthAdjust="spacingAndGlyphs" stroke="#1f1f1f" stroke-width="0.18" >Shape Fill</text>
<path d="M941.0,58.6 L942.6,60.199999999999996 L944.2,58.6" fill="none" stroke="#444" stroke-width="0.9" />
<rect x="886.4" y="71" width="8.6" height="6.4" fill="none" stroke="#555" stroke-width="0.8" />
<path d="M891.2,76.4 l5,-5.6 l1.6,1.4 l-5,5.6 l-2,0.6 z" fill="#2b6cb8" />
<rect x="886" y="79.4" width="11.5" height="2.6" fill="#2e62b5" />
<text x="900.2" y="79.5" font-size="9.0" fill="#1f1f1f" textLength="55.8" lengthAdjust="spacingAndGlyphs" stroke="#1f1f1f" stroke-width="0.18" >Shape Outline</text>
<path d="M959.3,75.60000000000001 L960.9,77.2 L962.5,75.60000000000001" fill="none" stroke="#444" stroke-width="0.9" />
<path d="M886.6,94.600 c0,-3 2,-5.200 5.200,-5.200 h5 c0,3 -2,5.200 -5.200,5.200 z" fill="#fff" stroke="#555" stroke-width="0.8" />
<path d="M886.8,95.400 h5.200 c3.400,0 5.400,-2.400 5.400,-5.600 l1.200,1.200 c0,3.600 -2.400,6.400 -6,6.400 h-4.600 z" fill="#8a8a8a" />
<text x="900.2" y="96.7" font-size="9.0" fill="#1f1f1f" textLength="52.3" lengthAdjust="spacingAndGlyphs" stroke="#1f1f1f" stroke-width="0.18" >Shape Effects</text>
<path d="M956.1999999999999,93.0 L957.8,94.6 L959.4,93.0" fill="none" stroke="#444" stroke-width="0.9" />
<text x="814.8" y="114.1" font-size="9.0" fill="#1f1f1f" textLength="32.2" lengthAdjust="spacingAndGlyphs" stroke="#1f1f1f" stroke-width="0.18" >Drawing</text>
<circle cx="988.6" cy="57" r="2.8" fill="none" stroke="#2b6cb8" stroke-width="1.1" />
<path d="M986.6,59.2 l-3.4,3.6" fill="none" stroke="#2b6cb8" stroke-width="1.3" />
<text x="996.4" y="62.3" font-size="9.0" fill="#1f1f1f" textLength="16.6" lengthAdjust="spacingAndGlyphs" stroke="#1f1f1f" stroke-width="0.18" >Find</text>
<text x="985.4" y="74.6" font-size="6.2" fill="#7b3fa0" font-weight="bold" text-anchor="middle" >ab</text>
<text x="989.4" y="80.6" font-size="6.2" fill="#2b6cb8" font-weight="bold" text-anchor="middle" >ac</text>
<path d="M982,78.6 l1.6,1.4 l-1.6,1.2" fill="none" stroke="#2b6cb8" stroke-width="0.8" />
<text x="996.4" y="79.5" font-size="9.0" fill="#1f1f1f" textLength="30.2" lengthAdjust="spacingAndGlyphs" stroke="#1f1f1f" stroke-width="0.18" >Replace</text>
<path d="M1035.8000000000002,75.60000000000001 L1037.4,77.2 L1039.0,75.60000000000001" fill="none" stroke="#444" stroke-width="0.9" />
<path d="M985,87.6 v9 l2.2,-2 l1.6,3.4 l1.2,-0.6 l-1.6,-3.2 h2.8 z" fill="#fff" stroke="#555" stroke-width="0.8" />
<text x="996.4" y="96.7" font-size="9.0" fill="#1f1f1f" textLength="23.0" lengthAdjust="spacingAndGlyphs" stroke="#1f1f1f" stroke-width="0.18" >Select</text>
<path d="M1022.9999999999999,93.0 L1024.6,94.6 L1026.1999999999998,93.0" fill="none" stroke="#444" stroke-width="0.9" />
<text x="997.6" y="114.1" font-size="9.0" fill="#1f1f1f" textLength="27.4" lengthAdjust="spacingAndGlyphs" stroke="#1f1f1f" stroke-width="0.18" >Editing</text>
<path d="M1186.6,113.6 l3.4,-3.2 l3.4,3.2" fill="none" stroke="#555" stroke-width="1" />
</g>
<g id="thumbpane" >
<rect x="0" y="118" width="1200" height="510" fill="#e6e6e6" />
<clipPath id="cp2"><rect x="0" y="118" width="181" height="60"/></clipPath>
<g clip-path="url(#cp2)">
<rect x="26.5" y="97" width="125" height="72.5" fill="#fff" stroke="#d4d4d4" stroke-width="1" />
<rect x="28.8" y="110" width="61.2" height="50.5" fill="#fdfdfd" />
<rect x="28.8" y="118" width="11.5" height="42.5" fill="#f4f5f7" />
<line x1="29.2" y1="118" x2="29.2" y2="160.5" stroke="#9db4cf" stroke-width="0.8" />
<line x1="40.3" y1="118" x2="40.3" y2="150" stroke="#d9d9d9" stroke-width="0.5" />
<line x1="45.3" y1="118" x2="45.3" y2="150" stroke="#e2e2e2" stroke-width="0.5" />
<line x1="82.0" y1="118" x2="82.0" y2="150" stroke="#e2e2e2" stroke-width="0.5" />
<rect x="40.3" y="150" width="49.7" height="10.5" fill="#efefef" />
<line x1="40.3" y1="150.2" x2="90.0" y2="150.2" stroke="#cfcfcf" stroke-width="0.5" />
<rect x="56.8" y="150.8" width="12" height="0.9" fill="#c4c4c4" />
<line x1="40.8" y1="152.6" x2="58.8" y2="152.6" stroke="#9a9a9a" stroke-width="0.5" />
<line x1="71.8" y1="152.6" x2="80.8" y2="152.6" stroke="#9a9a9a" stroke-width="0.5" />
<line x1="41.8" y1="154.6" x2="44.8" y2="154.6" stroke="#9a9a9a" stroke-width="0.5" />
<line x1="46.8" y1="155.8" x2="54.8" y2="155.8" stroke="#9a9a9a" stroke-width="0.5" />
<line x1="56.8" y1="155.8" x2="61.8" y2="155.8" stroke="#9a9a9a" stroke-width="0.5" />
<line x1="63.8" y1="155.8" x2="72.8" y2="155.8" stroke="#9a9a9a" stroke-width="0.5" />
<line x1="40.8" y1="157.8" x2="44.8" y2="157.8" stroke="#9a9a9a" stroke-width="0.5" />
<line x1="47.8" y1="157.8" x2="53.8" y2="157.8" stroke="#9a9a9a" stroke-width="0.5" />
<line x1="55.8" y1="157.8" x2="61.8" y2="157.8" stroke="#9a9a9a" stroke-width="0.5" />
<line x1="29.8" y1="153.4" x2="37.8" y2="153.4" stroke="#aaa" stroke-width="0.5" />
<line x1="29.8" y1="155.8" x2="33.8" y2="155.8" stroke="#aaa" stroke-width="0.5" />
<rect x="30.0" y="158.3" width="9.8" height="1.7" fill="#2fc145" />
<rect x="84.0" y="157.8" width="5" height="1.2" fill="#bdbdbd" />
<rect x="90.6" y="110" width="57.2" height="50.5" fill="#fdfdfd" />
<rect x="90.6" y="118" width="11.5" height="42.5" fill="#f4f5f7" />
<line x1="91.0" y1="118" x2="91.0" y2="160.5" stroke="#9db4cf" stroke-width="0.8" />
<line x1="102.1" y1="118" x2="102.1" y2="150" stroke="#d9d9d9" stroke-width="0.5" />
<line x1="107.1" y1="118" x2="107.1" y2="150" stroke="#e2e2e2" stroke-width="0.5" />
<line x1="139.8" y1="118" x2="139.8" y2="150" stroke="#e2e2e2" stroke-width="0.5" />
<rect x="102.1" y="150" width="45.7" height="10.5" fill="#efefef" />
<line x1="102.1" y1="150.2" x2="147.8" y2="150.2" stroke="#cfcfcf" stroke-width="0.5" />
<rect x="118.6" y="150.8" width="12" height="0.9" fill="#c4c4c4" />
<line x1="102.6" y1="152.6" x2="120.6" y2="152.6" stroke="#9a9a9a" stroke-width="0.5" />
<line x1="133.6" y1="152.6" x2="142.6" y2="152.6" stroke="#9a9a9a" stroke-width="0.5" />
<line x1="103.6" y1="154.6" x2="106.6" y2="154.6" stroke="#9a9a9a" stroke-width="0.5" />
<line x1="108.6" y1="155.8" x2="116.6" y2="155.8" stroke="#9a9a9a" stroke-width="0.5" />
<line x1="118.6" y1="155.8" x2="123.6" y2="155.8" stroke="#9a9a9a" stroke-width="0.5" />
<line x1="125.6" y1="155.8" x2="134.6" y2="155.8" stroke="#9a9a9a" stroke-width="0.5" />
<line x1="102.6" y1="157.8" x2="106.6" y2="157.8" stroke="#9a9a9a" stroke-width="0.5" />
<line x1="109.6" y1="157.8" x2="115.6" y2="157.8" stroke="#9a9a9a" stroke-width="0.5" />
<line x1="117.6" y1="157.8" x2="123.6" y2="157.8" stroke="#9a9a9a" stroke-width="0.5" />
<line x1="91.6" y1="153.4" x2="99.6" y2="153.4" stroke="#aaa" stroke-width="0.5" />
<line x1="91.6" y1="155.8" x2="95.6" y2="155.8" stroke="#aaa" stroke-width="0.5" />
<rect x="91.8" y="158.3" width="9.8" height="1.7" fill="#2fc145" />
<rect x="141.8" y="157.8" width="5" height="1.2" fill="#bdbdbd" />
<line x1="45.5" y1="118.6" x2="61" y2="118.6" stroke="#9a9a9a" stroke-width="0.9" />
<line x1="62.5" y1="118.6" x2="68" y2="118.6" stroke="#8ab1ee" stroke-width="0.9" />
<line x1="69" y1="118.6" x2="72" y2="118.6" stroke="#ee8a8a" stroke-width="0.9" />
<line x1="72.5" y1="118.6" x2="76" y2="118.6" stroke="#e59be8" stroke-width="0.9" />
<line x1="77" y1="118.6" x2="88" y2="118.6" stroke="#a8a8a8" stroke-width="0.9" />
<line x1="107" y1="118.4" x2="122.5" y2="118.4" stroke="#7f7f7f" stroke-width="0.9" />
<line x1="123.5" y1="118.4" x2="128.5" y2="118.4" stroke="#7ea7ea" stroke-width="0.9" />
<line x1="129" y1="118.4" x2="133.5" y2="118.4" stroke="#ee7f7f" stroke-width="0.9" />
<line x1="134" y1="118.4" x2="139.5" y2="118.4" stroke="#e08fe6" stroke-width="0.9" />
<line x1="140.5" y1="118.4" x2="147" y2="118.4" stroke="#8a8a8a" stroke-width="0.9" />
<line x1="107" y1="120.6" x2="122.5" y2="120.6" stroke="#7f7f7f" stroke-width="0.6" />
<line x1="123.5" y1="120.6" x2="128.5" y2="120.6" stroke="#7ea7ea" stroke-width="0.6" />
<line x1="129" y1="120.6" x2="133.5" y2="120.6" stroke="#ee7f7f" stroke-width="0.6" />
<line x1="134" y1="120.6" x2="139.5" y2="120.6" stroke="#e08fe6" stroke-width="0.6" />
<line x1="140.5" y1="120.6" x2="147" y2="120.6" stroke="#8a8a8a" stroke-width="0.6" />
<line x1="107" y1="122.8" x2="122.5" y2="122.8" stroke="#7f7f7f" stroke-width="0.9" />
<line x1="123.5" y1="122.8" x2="128.5" y2="122.8" stroke="#7ea7ea" stroke-width="0.9" />
<line x1="129" y1="122.8" x2="133.5" y2="122.8" stroke="#ee7f7f" stroke-width="0.9" />
<line x1="134" y1="122.8" x2="139.5" y2="122.8" stroke="#e08fe6" stroke-width="0.9" />
<line x1="140.5" y1="122.8" x2="147" y2="122.8" stroke="#8a8a8a" stroke-width="0.9" />
<line x1="107" y1="125" x2="122.5" y2="125" stroke="#7f7f7f" stroke-width="0.6" />
<line x1="123.5" y1="125" x2="128.5" y2="125" stroke="#7ea7ea" stroke-width="0.6" />
<line x1="129" y1="125" x2="133.5" y2="125" stroke="#ee7f7f" stroke-width="0.6" />
<line x1="134" y1="125" x2="139.5" y2="125" stroke="#e08fe6" stroke-width="0.6" />
<line x1="140.5" y1="125" x2="147" y2="125" stroke="#8a8a8a" stroke-width="0.6" />
<line x1="107" y1="127.2" x2="122.5" y2="127.2" stroke="#7f7f7f" stroke-width="0.9" />
<line x1="123.5" y1="127.2" x2="128.5" y2="127.2" stroke="#7ea7ea" stroke-width="0.9" />
<line x1="129" y1="127.2" x2="133.5" y2="127.2" stroke="#ee7f7f" stroke-width="0.9" />
<line x1="134" y1="127.2" x2="139.5" y2="127.2" stroke="#e08fe6" stroke-width="0.9" />
<line x1="140.5" y1="127.2" x2="147" y2="127.2" stroke="#8a8a8a" stroke-width="0.9" />
<rect x="28.8" y="160.5" width="119" height="4.2" fill="#4a5048" />
<rect x="80" y="160.8" width="67.8" height="3.6" fill="#77828c" />
<rect x="28.8" y="164.6" width="119" height="3.2" fill="#0c0e10" />
<rect x="32" y="165.1" width="25.5" height="2.2" fill="#f4f4f4" />
<rect x="66.0" y="165.3" width="1.7" height="1.8" fill="#f1f1f1" />
<rect x="69.4" y="165.3" width="1.7" height="1.8" fill="#f7d36a" />
<rect x="72.8" y="165.3" width="1.7" height="1.8" fill="#3fa9f0" />
<rect x="76.2" y="165.3" width="1.7" height="1.8" fill="#f1f1f1" />
<rect x="79.6" y="165.3" width="1.7" height="1.8" fill="#fff" />
<rect x="83.0" y="165.3" width="1.7" height="1.8" fill="#222" />
<rect x="86.4" y="165.3" width="1.7" height="1.8" fill="#e64a19" />
<rect x="89.8" y="165.3" width="1.7" height="1.8" fill="#ff6a2a" />
<rect x="93.2" y="165.3" width="1.7" height="1.8" fill="#1a1adf" />
<rect x="96.6" y="165.3" width="1.7" height="1.8" fill="#3a8fd9" />
<rect x="100.0" y="165.3" width="1.7" height="1.8" fill="#6e3fb8" />
<rect x="115.0" y="165.5" width="1.3" height="1.4" fill="#cfd6dc" />
<rect x="118.6" y="165.5" width="1.3" height="1.4" fill="#cfd6dc" />
<rect x="122.2" y="165.5" width="1.3" height="1.4" fill="#cfd6dc" />
<rect x="125.8" y="165.5" width="1.3" height="1.4" fill="#cfd6dc" />
<rect x="129.4" y="165.5" width="1.3" height="1.4" fill="#cfd6dc" />
<rect x="133.0" y="165.5" width="1.3" height="1.4" fill="#cfd6dc" />
<rect x="136.6" y="165.5" width="1.3" height="1.4" fill="#cfd6dc" />
<rect x="140.2" y="165.5" width="1.3" height="1.4" fill="#cfd6dc" />
</g>
<rect x="26.5" y="185.5" width="125" height="71.5" fill="#fff" stroke="#d4d4d4" stroke-width="1" />
<rect x="26.5" y="272.5" width="125" height="71.5" fill="#fff" stroke="#d4d4d4" stroke-width="1" />
<rect x="26.5" y="359.5" width="125" height="71.5" fill="#fff" stroke="#d4d4d4" stroke-width="1" />
<rect x="23.2" y="443.2" width="132.1" height="78" fill="#eef3f6" />
<rect x="25" y="445" width="128.5" height="74.4" fill="#fff" stroke="#b7472a" stroke-width="2.4" />
<rect x="26.5" y="533" width="125" height="71.5" fill="#fff" stroke="#d4d4d4" stroke-width="1" />
<text x="9.4" y="193" font-size="11.4" fill="#444" >3</text>
<text x="9.4" y="280" font-size="11.4" fill="#444" >4</text>
<text x="9.4" y="367" font-size="11.4" fill="#444" >5</text>
<text x="9.4" y="454" font-size="11.4" fill="#b7472a" >6</text>
<text x="9.4" y="541" font-size="11.4" fill="#444" >7</text>
<text x="36.3" y="194.8" font-size="5.1" fill="#4a4a4a" textLength="96.3" lengthAdjust="spacingAndGlyphs" >Identifying, developing, and using phrases</text>
<text x="36.3" y="201.8" font-size="5.1" fill="#4a4a4a" textLength="90.3" lengthAdjust="spacingAndGlyphs" >based on keywords and their collocates</text>
<text x="36.3" y="208.8" font-size="3.1" fill="#5a5a5a" textLength="14.2" lengthAdjust="spacingAndGlyphs" >• Phrases</text>
<text x="36.3" y="214" font-size="3.1" fill="#5a5a5a" textLength="105.2" lengthAdjust="spacingAndGlyphs" >• Use in website development, language databases, and search engines</text>
<text x="41" y="218.2" font-size="2.5" fill="#6a6a6a" textLength="95" lengthAdjust="spacingAndGlyphs" >• Sample phrases based on education as the keyword that could be used in</text>
<text x="43.5" y="221.6" font-size="2.8" fill="#e2574c" textLength="91.0" lengthAdjust="spacingAndGlyphs" font-style="italic" >such applications: education beyond the classroom, graduate education,</text>
<text x="43.5" y="225.3" font-size="2.8" fill="#e2574c" textLength="97.5" lengthAdjust="spacingAndGlyphs" font-style="italic" >global research education, education and lifelong learning, education and the</text>
<text x="43.5" y="228.7" font-size="2.8" fill="#e2574c" textLength="87.5" lengthAdjust="spacingAndGlyphs" font-style="italic" >environment, education and the economy, national education, higher</text>
<text x="43.5" y="232.1" font-size="2.8" fill="#e2574c" textLength="23.5" lengthAdjust="spacingAndGlyphs" font-style="italic" >education network</text>
<text x="36.3" y="282.8" font-size="5" fill="#555" textLength="49.5" lengthAdjust="spacingAndGlyphs" >Blends and Terminology</text>
<text x="33" y="295.2" font-size="3.1" fill="#5a5a5a" textLength="71.1" lengthAdjust="spacingAndGlyphs" >• Unito (Università di Torino/University of Turin)</text>
<text x="37.8" y="299.8" font-size="2.8" fill="#666" textLength="42.0" lengthAdjust="spacingAndGlyphs" >• Undergraduate degree (Laurea)</text>
<text x="37.8" y="303.7" font-size="2.8" fill="#666" textLength="97.7" lengthAdjust="spacingAndGlyphs" >• "Diploma di Scuola Secondaria Superiore" (Upper Secondary School Leaving</text>
<text x="39.5" y="307.3" font-size="2.8" fill="#666" textLength="17.2" lengthAdjust="spacingAndGlyphs" >Qualification)</text>
<text x="37.8" y="311.8" font-size="2.8" fill="#666" textLength="53.9" lengthAdjust="spacingAndGlyphs" >• Postgraduate degree (Laurea magistrale)</text>
<text x="37.2" y="319.4" font-size="2.4" fill="#808080" textLength="103.7" lengthAdjust="spacingAndGlyphs" >• Bilingual academic institutions, school programs generally instead of Bachelor of / Master of programs (generally)</text>
<text x="41.9" y="323.2" font-size="2.4" fill="#808080" textLength="39.7" lengthAdjust="spacingAndGlyphs" >Dottore in Scienze della formazione primaria</text>
<text x="41.9" y="327" font-size="2.4" fill="#808080" textLength="56.9" lengthAdjust="spacingAndGlyphs" >Bachelor’s degree – 3 years - Laurea – 3 anni (cicli)</text>
<text x="41.9" y="330.6" font-size="2.4" fill="#808080" textLength="46.8" lengthAdjust="spacingAndGlyphs" >Post-master’s degree dottore – PhD equivalent</text>
<text x="37.2" y="334.4" font-size="2.4" fill="#808080" textLength="46.2" lengthAdjust="spacingAndGlyphs" >• EU 3+2 (Bologna) model: 3 BA 2 for MA, MS</text>
<text x="36.3" y="372" font-size="5" fill="#555" textLength="44.7" lengthAdjust="spacingAndGlyphs" >Spelling differences</text>
<text x="36.3" y="382.6" font-size="3.1" fill="#5a5a5a" textLength="51.7" lengthAdjust="spacingAndGlyphs" >• PhD program vs. MA programme</text>
<text x="41" y="387" font-size="2.8" fill="#6a6a6a" textLength="27.3" lengthAdjust="spacingAndGlyphs" >• Degree programme</text>
<text x="35.9" y="458.6" font-size="4.1" fill="#555" textLength="109.7" lengthAdjust="spacingAndGlyphs" >Keywords and associated Phrases in a Website’s Meta-data</text>
<text x="36.22" y="465.4" font-size="3.3" fill="#5c5c5c" textLength="107.64" lengthAdjust="spacingAndGlyphs" >A sample of what may be the meta-data for a university’s website. This is</text>
<text x="36.22" y="468.5" font-size="3.3" fill="#5c5c5c" textLength="70.62" lengthAdjust="spacingAndGlyphs" >entered between the &lt;head&gt; and &lt;/head&gt; tags:</text>
<text x="36.22" y="473.8" font-size="3.3" fill="#5c5c5c" textLength="103.19" lengthAdjust="spacingAndGlyphs" >&lt;meta name="description" content=“We are an academic community</text>
<text x="36.22" y="477.6" font-size="3.3" fill="#5c5c5c" textLength="94.04" lengthAdjust="spacingAndGlyphs" >dedicated to creating the next generation of the world’s leading</text>
<text x="36.22" y="481.4" font-size="3.3" fill="#5c5c5c" textLength="52.02" lengthAdjust="spacingAndGlyphs" >researchers and entrepreneurs." /&gt;</text>
<text x="36.22" y="491.7" font-size="3.3" fill="#5c5c5c" textLength="102.16" lengthAdjust="spacingAndGlyphs" >&lt;meta name="keywords" content="education beyond the classroom,</text>
<text x="36.22" y="495.4" font-size="3.3" fill="#5c5c5c" textLength="103.32" lengthAdjust="spacingAndGlyphs" >graduate education, global research education, education and lifelong</text>
<text x="36.22" y="499.1" font-size="3.3" fill="#5c5c5c" textLength="104.43" lengthAdjust="spacingAndGlyphs" >learning, education and the environment, education and the economy,</text>
<text x="36.22" y="502.8" font-size="3.3" fill="#5c5c5c" textLength="100.93" lengthAdjust="spacingAndGlyphs" >national education, higher education network, graduate studies, our</text>
<text x="36.22" y="506.4" font-size="3.3" fill="#5c5c5c" textLength="98.99" lengthAdjust="spacingAndGlyphs" >history, about us, Master’s Studies, Admissions, Studies, Bachelor’s</text>
<text x="36.22" y="510" font-size="3.3" fill="#5c5c5c" textLength="94.9" lengthAdjust="spacingAndGlyphs" >Programs, International Programs in English, American students,</text>
<text x="36.22" y="513.6" font-size="3.3" fill="#5c5c5c" textLength="35.84" lengthAdjust="spacingAndGlyphs" >international studies" /&gt;</text>
<text x="35.7" y="541.9" font-size="3.5" fill="#6a6a6a" textLength="84.0" lengthAdjust="spacingAndGlyphs" >Long phrase expressions for a database or search engine</text>
<text x="36.4" y="548.4" font-size="2.4" fill="#a8a8a8" textLength="24.5" lengthAdjust="spacingAndGlyphs" >Database or Query term</text>
<text x="36.4" y="551.3" font-size="2.4" fill="#a8a8a8" textLength="40.3" lengthAdjust="spacingAndGlyphs" >&lt;phrase group-terms="education phrases"&gt;</text>
<text x="36.4" y="554" font-size="2.4" fill="#a8a8a8" textLength="23.9" lengthAdjust="spacingAndGlyphs" >&lt;terms associated-to&gt;</text>
<text x="36.4" y="556.8" font-size="2.4" fill="#a8a8a8" textLength="12.6" lengthAdjust="spacingAndGlyphs" >&lt;list terms&gt;</text>
<text x="45.8" y="559.6" font-size="2.4" fill="#a8a8a8" textLength="1.0" lengthAdjust="spacingAndGlyphs" >{</text>
<text x="45.8" y="562.2" font-size="2.4" fill="#707070" textLength="18.3" lengthAdjust="spacingAndGlyphs" >education beyond</text>
<text x="45.8" y="564.2" font-size="2.4" fill="#707070" textLength="22.1" lengthAdjust="spacingAndGlyphs" >education graduate</text>
<text x="45.8" y="567" font-size="2.4" fill="#707070" textLength="19.8" lengthAdjust="spacingAndGlyphs" >education research</text>
<text x="45.8" y="569.4" font-size="2.4" fill="#a8a8a8" textLength="18.3" lengthAdjust="spacingAndGlyphs" >education lifelong</text>
<text x="45.8" y="572.6" font-size="2.4" fill="#a8a8a8" textLength="1.0" lengthAdjust="spacingAndGlyphs" >}</text>
<text x="36.4" y="574.8" font-size="2.4" fill="#a8a8a8" textLength="1.0" lengthAdjust="spacingAndGlyphs" >}</text>
<text x="36.4" y="577.1" font-size="2.4" fill="#707070" textLength="6.9" lengthAdjust="spacingAndGlyphs" >&lt;/terms&gt;</text>
<text x="36.4" y="582.1" font-size="2.4" fill="#707070" textLength="4.4" lengthAdjust="spacingAndGlyphs" >&lt;list&gt;</text>
<text x="45.8" y="585" font-size="2.4" fill="#707070" textLength="19.5" lengthAdjust="spacingAndGlyphs" >national education</text>
<text x="45.8" y="587.4" font-size="2.4" fill="#8a8a8a" textLength="21.1" lengthAdjust="spacingAndGlyphs" >higher education net</text>
<text x="45.8" y="590.3" font-size="2.4" fill="#8a8a8a" textLength="30.2" lengthAdjust="spacingAndGlyphs" >education and the economy</text>
<text x="36.4" y="592.8" font-size="2.4" fill="#a8a8a8" textLength="5.0" lengthAdjust="spacingAndGlyphs" >&lt;/list&gt;</text>
<text x="36.4" y="595.7" font-size="2.4" fill="#a8a8a8" textLength="7.3" lengthAdjust="spacingAndGlyphs" >&lt;/phrase&gt;</text>
<text x="36.4" y="598.1" font-size="2.4" fill="#707070" textLength="4.4" lengthAdjust="spacingAndGlyphs" >&lt;end&gt;</text>
<rect x="167" y="118" width="12" height="509" fill="#dcdcdc" />
<rect x="167.5" y="119.5" width="11" height="11" fill="#fff" stroke="#c2c2c2" stroke-width="1" />
<path d="M170.6,126.6 l2.4,-2.8 l2.4,2.8 z" fill="#606060" />
<rect x="168.5" y="224" width="9.5" height="390" fill="#fff" stroke="#c8c8c8" stroke-width="0.8" />
<rect x="167.5" y="615.5" width="11" height="11" fill="#fff" stroke="#c2c2c2" stroke-width="1" />
<path d="M170.6,619.6 l2.4,2.8 l2.4,-2.8 z" fill="#606060" />
<line x1="181.5" y1="118" x2="181.5" y2="627" stroke="#f5f5f5" stroke-width="1.6" />
<line x1="183" y1="118" x2="183" y2="627" stroke="#cfcfcf" stroke-width="0.8" />
</g>
<g id="rightscroll" >
<rect x="1188" y="118" width="12" height="466" fill="#dcdcdc" />
<rect x="1188.5" y="119.5" width="11" height="11" fill="#fff" stroke="#c2c2c2" stroke-width="1" />
<path d="M1191.6,126.6 l2.4,-2.8 l2.4,2.8 z" fill="#606060" />
<rect x="1188.9" y="446.2" width="10.2" height="62.2" fill="#fff" stroke="#c8c8c8" stroke-width="0.8" />
<rect x="1188.5" y="572.5" width="11" height="11" fill="#fff" stroke="#c2c2c2" stroke-width="1" />
<path d="M1191.6,576.4 l2.4,2.8 l2.4,-2.8 z" fill="#606060" />
<path d="M1191.6,590.2 l2.4,-2.6 l2.4,2.6 z M1191.6,594 l2.4,-2.6 l2.4,2.6 z" fill="#606060" />
<path d="M1191.6,600.8 l2.4,2.6 l2.4,-2.6 z M1191.6,604.6 l2.4,2.6 l2.4,-2.6 z" fill="#606060" />
<line x1="183" y1="626.5" x2="1200" y2="626.5" stroke="#c6c6c6" stroke-width="1" />
</g>
<g id="slide" >
<rect x="255.5" y="128.5" width="861" height="485.2" fill="#fff" stroke="#c4c4c4" stroke-width="1" />
<text y="210.1" font-size="29.6" fill="#000" stroke="#fff" stroke-width="0.7"><tspan x="317.20" textLength="124.92" lengthAdjust="spacingAndGlyphs">Keywords</tspan> <tspan x="449.30" textLength="48.58" lengthAdjust="spacingAndGlyphs">and</tspan> <tspan x="505.06" textLength="135.22" lengthAdjust="spacingAndGlyphs">associated</tspan> <tspan x="647.46" textLength="99.37" lengthAdjust="spacingAndGlyphs">Phrases</tspan> <tspan x="754.01" textLength="23.97" lengthAdjust="spacingAndGlyphs">in</tspan> <tspan x="785.16" textLength="15.21" lengthAdjust="spacingAndGlyphs">a</tspan> <tspan x="807.55" textLength="123.64" lengthAdjust="spacingAndGlyphs">Website’s</tspan> <tspan x="938.37" textLength="135.03" lengthAdjust="spacingAndGlyphs">Meta-data</tspan></text>
<text y="256.5" font-size="22.5" fill="#000" ><tspan x="321.30" textLength="14.50" lengthAdjust="spacingAndGlyphs">A</tspan> <tspan x="341.46" textLength="73.21" lengthAdjust="spacingAndGlyphs">sample</tspan> <tspan x="420.34" textLength="20.86" lengthAdjust="spacingAndGlyphs">of</tspan> <tspan x="446.86" textLength="51.24" lengthAdjust="spacingAndGlyphs">what</tspan> <tspan x="503.77" textLength="42.90" lengthAdjust="spacingAndGlyphs">may</tspan> <tspan x="552.33" textLength="25.63" lengthAdjust="spacingAndGlyphs">be</tspan> <tspan x="583.63" textLength="34.03" lengthAdjust="spacingAndGlyphs">the</tspan> <tspan x="623.33" textLength="105.14" lengthAdjust="spacingAndGlyphs">meta-data</tspan> <tspan x="734.13" textLength="29.07" lengthAdjust="spacingAndGlyphs">for</tspan> <tspan x="768.87" textLength="12.00" lengthAdjust="spacingAndGlyphs">a</tspan> <tspan x="786.54" textLength="114.50" lengthAdjust="spacingAndGlyphs">university’s</tspan> <tspan x="906.71" textLength="85.68" lengthAdjust="spacingAndGlyphs">website.</tspan> <tspan x="998.05" textLength="40.93" lengthAdjust="spacingAndGlyphs">This</tspan> <tspan x="1044.65" textLength="15.55" lengthAdjust="spacingAndGlyphs">is</tspan></text>
<text y="280.4" font-size="22.5" fill="#000" ><tspan x="321.30" textLength="79.91" lengthAdjust="spacingAndGlyphs">entered</tspan> <tspan x="406.86" textLength="89.55" lengthAdjust="spacingAndGlyphs">between</tspan> <tspan x="502.07" textLength="33.97" lengthAdjust="spacingAndGlyphs">the</tspan> <tspan x="541.70" textLength="75.64" lengthAdjust="spacingAndGlyphs">&lt;head&gt;</tspan> <tspan x="623.00" textLength="38.27" lengthAdjust="spacingAndGlyphs">and</tspan> <tspan x="666.92" textLength="85.30" lengthAdjust="spacingAndGlyphs">&lt;/head&gt;</tspan> <tspan x="757.89" textLength="48.31" lengthAdjust="spacingAndGlyphs">tags:</tspan></text>
<text y="312.8" font-size="22.5" fill="#000" ><tspan x="321.30" textLength="64.93" lengthAdjust="spacingAndGlyphs">&lt;meta</tspan> <tspan x="391.89" textLength="204.16" lengthAdjust="spacingAndGlyphs">name="description"</tspan> <tspan x="601.72" textLength="135.40" lengthAdjust="spacingAndGlyphs">content=“We</tspan> <tspan x="742.78" textLength="32.88" lengthAdjust="spacingAndGlyphs">are</tspan> <tspan x="781.33" textLength="25.17" lengthAdjust="spacingAndGlyphs">an</tspan> <tspan x="812.16" textLength="96.40" lengthAdjust="spacingAndGlyphs">academic</tspan> <tspan x="914.23" textLength="115.47" lengthAdjust="spacingAndGlyphs">community</tspan></text>
<text y="336.8" font-size="22.5" fill="#000" ><tspan x="321.30" textLength="100.46" lengthAdjust="spacingAndGlyphs">dedicated</tspan> <tspan x="427.42" textLength="21.36" lengthAdjust="spacingAndGlyphs">to</tspan> <tspan x="454.45" textLength="82.15" lengthAdjust="spacingAndGlyphs">creating</tspan> <tspan x="542.27" textLength="34.02" lengthAdjust="spacingAndGlyphs">the</tspan> <tspan x="581.96" textLength="44.57" lengthAdjust="spacingAndGlyphs">next</tspan> <tspan x="632.19" textLength="110.01" lengthAdjust="spacingAndGlyphs">generation</tspan> <tspan x="747.87" textLength="20.86" lengthAdjust="spacingAndGlyphs">of</tspan> <tspan x="774.39" textLength="34.02" lengthAdjust="spacingAndGlyphs">the</tspan> <tspan x="814.08" textLength="73.06" lengthAdjust="spacingAndGlyphs">world’s</tspan> <tspan x="892.81" textLength="74.09" lengthAdjust="spacingAndGlyphs">leading</tspan></text>
<text y="360.8" font-size="22.5" fill="#000" ><tspan x="321.30" textLength="117.85" lengthAdjust="spacingAndGlyphs">researchers</tspan> <tspan x="444.81" textLength="38.33" lengthAdjust="spacingAndGlyphs">and</tspan> <tspan x="488.80" textLength="161.97" lengthAdjust="spacingAndGlyphs">entrepreneurs."</tspan> <tspan x="656.44" textLength="22.16" lengthAdjust="spacingAndGlyphs">/&gt;</tspan></text>
<text y="427.7" font-size="22.5" fill="#000" ><tspan x="321.30" textLength="64.91" lengthAdjust="spacingAndGlyphs">&lt;meta</tspan> <tspan x="391.88" textLength="186.78" lengthAdjust="spacingAndGlyphs">name="keywords"</tspan> <tspan x="584.32" textLength="202.24" lengthAdjust="spacingAndGlyphs">content="education</tspan> <tspan x="792.23" textLength="76.06" lengthAdjust="spacingAndGlyphs">beyond</tspan> <tspan x="873.95" textLength="34.02" lengthAdjust="spacingAndGlyphs">the</tspan> <tspan x="913.64" textLength="108.96" lengthAdjust="spacingAndGlyphs">classroom,</tspan></text>
<text y="451.7" font-size="22.5" fill="#000" ><tspan x="321.30" textLength="90.76" lengthAdjust="spacingAndGlyphs">graduate</tspan> <tspan x="417.72" textLength="107.60" lengthAdjust="spacingAndGlyphs">education,</tspan> <tspan x="530.99" textLength="61.71" lengthAdjust="spacingAndGlyphs">global</tspan> <tspan x="598.37" textLength="87.32" lengthAdjust="spacingAndGlyphs">research</tspan> <tspan x="691.35" textLength="107.60" lengthAdjust="spacingAndGlyphs">education,</tspan> <tspan x="804.62" textLength="101.34" lengthAdjust="spacingAndGlyphs">education</tspan> <tspan x="911.63" textLength="38.35" lengthAdjust="spacingAndGlyphs">and</tspan> <tspan x="955.65" textLength="74.95" lengthAdjust="spacingAndGlyphs">lifelong</tspan></text>
<text y="475.7" font-size="22.5" fill="#000" ><tspan x="321.30" textLength="89.37" lengthAdjust="spacingAndGlyphs">learning,</tspan> <tspan x="416.34" textLength="101.30" lengthAdjust="spacingAndGlyphs">education</tspan> <tspan x="523.30" textLength="38.33" lengthAdjust="spacingAndGlyphs">and</tspan> <tspan x="567.30" textLength="34.03" lengthAdjust="spacingAndGlyphs">the</tspan> <tspan x="606.99" textLength="137.07" lengthAdjust="spacingAndGlyphs">environment,</tspan> <tspan x="749.73" textLength="101.30" lengthAdjust="spacingAndGlyphs">education</tspan> <tspan x="856.69" textLength="38.33" lengthAdjust="spacingAndGlyphs">and</tspan> <tspan x="900.69" textLength="34.03" lengthAdjust="spacingAndGlyphs">the</tspan> <tspan x="940.38" textLength="97.82" lengthAdjust="spacingAndGlyphs">economy,</tspan></text>
<text y="499.7" font-size="22.5" fill="#000" ><tspan x="321.30" textLength="83.12" lengthAdjust="spacingAndGlyphs">national</tspan> <tspan x="410.09" textLength="107.67" lengthAdjust="spacingAndGlyphs">education,</tspan> <tspan x="523.43" textLength="65.15" lengthAdjust="spacingAndGlyphs">higher</tspan> <tspan x="594.26" textLength="101.41" lengthAdjust="spacingAndGlyphs">education</tspan> <tspan x="701.34" textLength="91.27" lengthAdjust="spacingAndGlyphs">network,</tspan> <tspan x="798.28" textLength="90.82" lengthAdjust="spacingAndGlyphs">graduate</tspan> <tspan x="894.77" textLength="78.60" lengthAdjust="spacingAndGlyphs">studies,</tspan> <tspan x="979.04" textLength="35.16" lengthAdjust="spacingAndGlyphs">our</tspan></text>
<text y="523.7" font-size="22.5" fill="#000" ><tspan x="321.30" textLength="74.57" lengthAdjust="spacingAndGlyphs">history,</tspan> <tspan x="401.55" textLength="60.03" lengthAdjust="spacingAndGlyphs">about</tspan> <tspan x="467.25" textLength="29.26" lengthAdjust="spacingAndGlyphs">us,</tspan> <tspan x="502.18" textLength="88.04" lengthAdjust="spacingAndGlyphs">Master’s</tspan> <tspan x="595.89" textLength="80.62" lengthAdjust="spacingAndGlyphs">Studies,</tspan> <tspan x="682.19" textLength="121.39" lengthAdjust="spacingAndGlyphs">Admissions,</tspan> <tspan x="809.25" textLength="80.62" lengthAdjust="spacingAndGlyphs">Studies,</tspan> <tspan x="895.55" textLength="105.35" lengthAdjust="spacingAndGlyphs">Bachelor’s</tspan></text>
<text y="547.7" font-size="22.5" fill="#000" ><tspan x="321.30" textLength="102.43" lengthAdjust="spacingAndGlyphs">Programs,</tspan> <tspan x="429.39" textLength="131.41" lengthAdjust="spacingAndGlyphs">International</tspan> <tspan x="566.46" textLength="96.19" lengthAdjust="spacingAndGlyphs">Programs</tspan> <tspan x="668.30" textLength="18.89" lengthAdjust="spacingAndGlyphs">in</tspan> <tspan x="692.85" textLength="77.80" lengthAdjust="spacingAndGlyphs">English,</tspan> <tspan x="776.31" textLength="96.89" lengthAdjust="spacingAndGlyphs">American</tspan> <tspan x="878.85" textLength="93.95" lengthAdjust="spacingAndGlyphs">students,</tspan></text>
<text y="571.7" font-size="22.5" fill="#000" ><tspan x="321.30" textLength="130.76" lengthAdjust="spacingAndGlyphs">international</tspan> <tspan x="457.71" textLength="82.13" lengthAdjust="spacingAndGlyphs">studies"</tspan> <tspan x="545.49" textLength="22.11" lengthAdjust="spacingAndGlyphs">/&gt;</tspan></text>
<line x1="753.5" y1="256.5" x2="753.5" y2="288" stroke="#000" stroke-width="1" />
<rect x="314.5" y="235" width="762" height="352.3" fill="none" stroke="#606060" stroke-width="1" stroke-dasharray="1,1.5"/>
<line x1="695.6" y1="214" x2="695.6" y2="231.5" stroke="#8c8c8c" stroke-width="0.9" />
<path d="M699.6,206.2 A4.7,4.7 0 1 0 698.8,212.2" fill="none" stroke="#8c8c8c" stroke-width="3.3" />
<path d="M699.6,206.2 A4.7,4.7 0 1 0 698.8,212.2" fill="none" stroke="#fff" stroke-width="1.7" />
<path d="M697.2,207.6 l6.6,-0.6 l-3.2,4.6 z" fill="#fff" stroke="#8c8c8c" stroke-width="0.8" />
<circle cx="314.5" cy="235" r="3.5" fill="#fff" stroke="#8c8c8c" stroke-width="1.4" />
<circle cx="695.6" cy="235" r="3.5" fill="#fff" stroke="#8c8c8c" stroke-width="1.4" />
<circle cx="1076.6" cy="235" r="3.5" fill="#fff" stroke="#8c8c8c" stroke-width="1.4" />
<circle cx="314.5" cy="411" r="3.5" fill="#fff" stroke="#8c8c8c" stroke-width="1.4" />
<circle cx="1076.6" cy="411" r="3.5" fill="#fff" stroke="#8c8c8c" stroke-width="1.4" />
<circle cx="314.5" cy="587.3" r="3.5" fill="#fff" stroke="#8c8c8c" stroke-width="1.4" />
<circle cx="695.6" cy="587.3" r="3.5" fill="#fff" stroke="#8c8c8c" stroke-width="1.4" />
<circle cx="1076.6" cy="587.3" r="3.5" fill="#fff" stroke="#8c8c8c" stroke-width="1.4" />
<rect x="289" y="572" width="14" height="14.5" fill="#fdfdfd" stroke="#c0c0c0" stroke-width="1" />
<path d="M291.400,578.400 h9.600 M291.400,580.200 h9.600" fill="none" stroke="#8a8a8a" stroke-width="0.7" />
<path d="M296.200,573.800 v3.400 M294.400,575.400 l1.800,1.900 l1.800,-1.900" fill="none" stroke="#2b63f0" stroke-width="1.2" />
<path d="M296.200,585 v-3.400 M294.400,583.400 l1.800,-1.900 l1.800,1.900" fill="none" stroke="#2b63f0" stroke-width="1.2" />
</g>
<g id="statusbar" >
<rect x="0" y="628.3" width="1200" height="17" fill="#f3f3f3" />
<text x="6.3" y="640" font-size="9.0" fill="#2b2b2b" textLength="42.0" lengthAdjust="spacingAndGlyphs" >Slide 6 of 7</text>
<path d="M64.2,631.8 h3.6 v8 h-3.6 z M67.8,631.8 h3.4 v3" fill="none" stroke="#666" stroke-width="0.8" />
<path d="M69.6,636 l3,3 M72.6,636 l-3,3" fill="none" stroke="#666" stroke-width="0.8" />
<text x="86.8" y="640" font-size="9.0" fill="#2b2b2b" textLength="86.2" lengthAdjust="spacingAndGlyphs" >English (United States)</text>
<path d="M815.4,635.6 h7 M815.4,637.8 h7 M815.4,640 h7" fill="none" stroke="#666" stroke-width="0.8" />
<path d="M817.4,633.6 l1.5,-1.6 l1.5,1.6 z" fill="#666" />
<text x="827.5" y="640" font-size="9.0" fill="#2b2b2b" textLength="21.1" lengthAdjust="spacingAndGlyphs" >Notes</text>
<path d="M864.6,631.6 h9.6 v6.2 h-5.4 l-2.2,2.4 v-2.4 h-2 z" fill="#555" />
<text x="877" y="640" font-size="9.0" fill="#2b2b2b" textLength="40" lengthAdjust="spacingAndGlyphs" >Comments</text>
<rect x="932" y="629" width="29" height="16" fill="#c8c8c8" />
<rect x="941.4" y="632" width="10" height="9" fill="none" stroke="#555" stroke-width="0.9" />
<path d="M944,632 v9 M944,638 h7.4" fill="none" stroke="#555" stroke-width="0.8" />
<rect x="971.3" y="631.6" width="4.4" height="3.6" fill="none" stroke="#666" stroke-width="0.8" />
<rect x="971.3" y="637.0" width="4.4" height="3.6" fill="none" stroke="#666" stroke-width="0.8" />
<rect x="977.3" y="631.6" width="4.4" height="3.6" fill="none" stroke="#666" stroke-width="0.8" />
<rect x="977.3" y="637.0" width="4.4" height="3.6" fill="none" stroke="#666" stroke-width="0.8" />
<path d="M1001.4,632.4 h4 l0.8,0.8 l0.8,-0.8 h4 v8 h-4 l-0.8,0.8 l-0.8,-0.8 h-4 z M1006.2,633.2 v8" fill="none" stroke="#666" stroke-width="0.8" />
<path d="M1003,635 h1.8 M1003,637 h1.8 M1007.8,635 h1.8 M1007.8,637 h1.8" fill="none" stroke="#666" stroke-width="0.6" />
<path d="M1030.8,631.6 h11.4" fill="none" stroke="#666" stroke-width="1" />
<path d="M1032.2,632 v5.4 h8.6 v-5.4" fill="none" stroke="#666" stroke-width="0.8" />
<path d="M1036.5,637.4 v3 M1034,640.8 h5" fill="none" stroke="#666" stroke-width="0.8" />
<path d="M1056,636.5 h5" fill="none" stroke="#444" stroke-width="0.9" />
<path d="M1065.5,636.5 h75" fill="none" stroke="#8a8a8a" stroke-width="0.9" />
<rect x="1099" y="631.8" width="3" height="9.6" fill="#555" />
<path d="M1103,634.4 v4.4" fill="none" stroke="#8a8a8a" stroke-width="0.8" />
<path d="M1144.6,636.5 h5 M1147.1,634 v5" fill="none" stroke="#444" stroke-width="0.9" />
<text x="1160.7" y="640" font-size="9.0" fill="#2b2b2b" textLength="14.8" lengthAdjust="spacingAndGlyphs" >90%</text>
<rect x="1186.4" y="631.8" width="9.2" height="9.2" fill="none" stroke="#666" stroke-width="0.8" />
<path d="M1188.4,635.4 v-1.8 h1.8 M1193.6,635.4 v-1.8 h-1.8 M1188.4,637.4 v1.8 h1.8 M1193.6,637.4 v1.8 h-1.8" fill="none" stroke="#666" stroke-width="0.8" />
</g>
<g id="taskbar" >
<defs><linearGradient id="tbg" x1="0" x2="1" y1="0" y2="0"><stop offset="0" stop-color="#20201b"/><stop offset="0.4" stop-color="#20211e"/><stop offset="0.72" stop-color="#1c2024"/><stop offset="1" stop-color="#1e252d"/></linearGradient></defs>
<rect x="0" y="644.5" width="1200" height="30.5" fill="url(#tbg)" />
<line x1="0" y1="644.9" x2="36.5" y2="644.9" stroke="#0c0c0c" stroke-width="0.8" />
<line x1="294" y1="644.9" x2="1200" y2="644.9" stroke="#0c0c0c" stroke-width="0.8" />
<line x1="1196.5" y1="645" x2="1196.5" y2="675" stroke="#8a8f94" stroke-width="0.8" />
<path d="M12,655.400 L17.400,654.700 V659.600 H12 z M18.400,654.500 L24.400,653.600 V659.600 H18.400 z M12,660.500 H17.400 V665.400 L12,664.700 z M18.400,660.500 H24.400 V666.500 L18.400,665.600 z" fill="#fff" />
<rect x="36.5" y="645.2" width="257.5" height="29.8" fill="#f2f2f2" />
<line x1="36.5" y1="645.6" x2="294" y2="645.6" stroke="#c4c4c4" stroke-width="0.9" />
<line x1="36.5" y1="674.4" x2="294" y2="674.4" stroke="#c4c4c4" stroke-width="0.9" />
<circle cx="52.8" cy="657.6" r="4" fill="none" stroke="#2e2e2e" stroke-width="1.2" />
<path d="M50,660.600 l-4.600,5.200" fill="none" stroke="#2e2e2e" stroke-width="1.3" />
<text x="66.3" y="664.4" font-size="11.4" fill="#3a3a3a" textLength="95.5" lengthAdjust="spacingAndGlyphs" >Type here to search</text>
<circle cx="312.1" cy="659.9" r="5.1" fill="none" stroke="#fff" stroke-width="1.5" />
<rect x="342.4" y="657.4" width="7.2" height="4.6" fill="none" stroke="#fff" stroke-width="1.1" />
<path d="M341.8,654.800 h8.400 M342.4,653.800 v2 M349.600,653.800 v2" fill="none" stroke="#fff" stroke-width="1" />
<path d="M341.8,664.400 h8.400 M342.4,663.400 v2 M349.600,663.400 v2" fill="none" stroke="#fff" stroke-width="1" />
<rect x="352.4" y="654" width="1.5" height="1.7" fill="#fff" />
<path d="M353.100,657.400 v7.800" fill="none" stroke="#fff" stroke-width="1.3" />
<path d="M377.600,656 v-2.600 a1.600,1.600 0 0 1 1.600,-1.600 h6 a1.600,1.600 0 0 1 1.600,1.600 v2.600" fill="none" stroke="#2aa7ea" stroke-width="1.4" />
<path d="M373,654.800 h18.700 v11.400 a3,3 0 0 1 -3,3 h-12.700 a3,3 0 0 1 -3,-3 z" fill="#f4f4f4" />
<rect x="378.7" y="658.3" width="3.3" height="3" fill="#f25022" />
<rect x="382.6" y="658.3" width="3.3" height="3" fill="#7fba00" />
<rect x="378.7" y="662" width="3.3" height="3" fill="#00a4ef" />
<rect x="382.6" y="662" width="3.3" height="3" fill="#ffb900" />
<path d="M403,653.4 h6 l1.6,1.8 h9 v4 h-16.6 z" fill="#e8a92c" />
<rect x="403" y="656.4" width="16.8" height="10" fill="#f7d36a" stroke="none" stroke-width="0" rx="0.8" />
<rect x="407" y="662" width="8.8" height="4.6" fill="#3a8fd9" />
<rect x="409.4" y="664.2" width="4" height="2.4" fill="#f7d36a" />
<path d="M432.6,658.6 l8.4,-6 l8.4,6 v8 h-16.8 z" fill="#1a78c8" />
<path d="M432.6,658.8 l8.4,5.4 l8.4,-5.4 v7.8 h-16.8 z" fill="#3fa9f0" />
<path d="M432.6,666.6 l8.4,-5.6 l8.4,5.6 z" fill="#62c0f7" />
<rect x="461.6" y="650.8" width="17.6" height="17.6" fill="#fff" />
<text x="470.2" y="662.4" font-size="13" fill="#222" font-weight="bold" text-anchor="middle" >a</text>
<path d="M464.6,664 c3.6,2.4 8,2.4 11.4,0" fill="none" stroke="#f59a1c" stroke-width="1.1" />
<path d="M495,652.0999999999999 l4.3,2.7 l-4.3,2.7 l-4.3,-2.7 z" fill="#fff" />
<path d="M503.6,652.0999999999999 l4.3,2.7 l-4.3,2.7 l-4.3,-2.7 z" fill="#fff" />
<path d="M495,657.5 l4.3,2.7 l-4.3,2.7 l-4.3,-2.7 z" fill="#fff" />
<path d="M503.6,657.5 l4.3,2.7 l-4.3,2.7 l-4.3,-2.7 z" fill="#fff" />
<path d="M499.3,663.1 l4.1,2.3 l-4.1,2.3 l-4.1,-2.3 z" fill="#fff" />
<path d="M532.600,650.800 l-8.400,8.600 l4.200,2.600 l-4.800,7 l9.400,-9.200 l-4.400,-2.400 z" fill="#fff" />
<path d="M552.4,655.6 l7.6,-3.6 l4.6,1.4 v13.4 l-4.6,1.4 l-7.6,-3 l7.2,0.8 v-11.6 l-4.2,1 v7.8 l-3,1.4 z" fill="#e64a19" />
<path d="M560,652 l4.6,1.4 v13.4 l-4.6,1.4 z" fill="#c2360f" />
<circle cx="585.8" cy="660.6" r="7.4" fill="#ff9a1f" />
<path d="M579.2,657.2 c1.2,-3.6 5,-5.6 8.4,-4.6 c-1,-1.6 -0.4,-3 -0.4,-3 c3.6,1.6 6.4,5.4 6,10 c-0.4,4.6 -4.2,8 -8.8,7.6 c-4.4,-0.4 -7,-4.6 -6.4,-8.4 z" fill="#ff6a2a" />
<circle cx="585.4" cy="660.8" r="4" fill="#7b3ff2" />
<path d="M581.8,659.4 c1.6,-1.4 4,-1.2 5.2,0.2 c-1.4,-0.2 -2.4,0.6 -2.2,1.8 c0.2,1.2 1.6,1.8 3,1 c-0.8,1.8 -3.4,2.4 -5,1.2 c-1.4,-1 -1.8,-2.8 -1,-4.2 z" fill="#ffbd4f" />
<path d="M607.6,663.6 v-3.4 a7,7 0 0 1 14,0 v3.4" fill="none" stroke="#1a1adf" stroke-width="2.2" />
<rect x="606" y="659.8" width="3.6" height="7.6" fill="#1a1adf" stroke="none" stroke-width="0" rx="1.2" />
<rect x="619.6" y="659.8" width="3.6" height="7.6" fill="#1a1adf" stroke="none" stroke-width="0" rx="1.2" />
<ellipse cx="614.6" cy="661.4" rx="4.6" ry="3.2" fill="#f5a21c"/>
<path d="M610.6,661.4 h8" fill="none" stroke="#e0281c" stroke-width="1.4" />
<circle cx="643" cy="660.4" r="8" fill="#db4437" />
<path d="M643,660.4 L636.1,656.4 A8,8 0 0 0 639,667.3 z" fill="#0f9d58" />
<path d="M643,660.4 L639,667.3 A8,8 0 0 0 651,660.4 z" fill="#ffcd40" />
<path d="M643,660.4 L636.07,656.4 A8,8 0 0 1 649.93,656.4 z" fill="#db4437" />
<path d="M643,652.4 A8,8 0 0 1 651,660.4 L643,660.4 z" fill="#db4437" />
<path d="M636.07,664.4 A8,8 0 0 0 643,668.4 L647,661.5 L643,660.4 z" fill="#0f9d58" />
<circle cx="643" cy="660.4" r="3.7" fill="#fff" />
<circle cx="643" cy="660.4" r="2.9" fill="#4285f4" />
<rect x="662.6" y="653.6" width="15" height="13.6" fill="#4e8fce" stroke="none" stroke-width="0" rx="1" />
<rect x="664.2" y="655.2" width="11.8" height="10.4" fill="#dfeaf5" />
<circle cx="669.4" cy="660.4" r="4.4" fill="#f28c1f" />
<path d="M668,658 l3.6,2.4 l-3.6,2.4 z" fill="#fff" />
<path d="M694.6,654 l9.6,-1.6 l1.4,12.6 l-11,2.6 z" fill="#bfe3f5" />
<path d="M693.4,656 l9.6,-1.6 l0.6,11.4 l-10.2,2.4 z" fill="#e9f5fb" />
<path d="M694.6,654 l9.6,-1.6 l0.2,1.8 l-9.8,1.8 z" fill="#7f8b94" />
<path d="M695.4,659 l6,-1 M695.4,661.4 l6,-1 M695.4,663.8 l6,-1" fill="none" stroke="#9cc3d9" stroke-width="0.7" />
<circle cx="728.2" cy="660.4" r="7.8" fill="#1b9de2" />
<path d="M720.6,661.4 c0,-5 3.6,-8.8 8,-8.8 c4.4,0 7.4,3.2 7.4,6.8 c0,2.4 -1.6,3.6 -3.6,3.6 c-1.6,0 -2.6,-0.6 -2.6,-1.4 c0,-0.8 0.8,-1 0.8,-2.2 c0,-1.4 -1.4,-2.6 -3.2,-2.6 c-3,0 -5.2,2.6 -5.2,5.8 z" fill="#35c1a0" />
<path d="M720.5,660.8 c0.4,4.4 3.6,7.6 7.8,7.6 c2.2,0 4.2,-0.8 5.6,-2.2 c-1.2,0.6 -2.6,0.8 -4,0.4 c-2.6,-0.8 -4.4,-3 -4.2,-5.6 c0.2,-2 1.6,-3.4 3.4,-3.8 c-4,-0.8 -8,1 -8.600,3.6 z" fill="#0c59a4" />
<path d="M762.6,652.4 l3,1.4 v13.2 l-3,1.4 l-8.6,-7 l-3,2.4 l-1.4,-0.8 v-5.600 l1.4,-0.8 l3,2.400 z M762.6,656.6 l-4.800,3.800 l4.800,3.800 z" fill="#22a6f2" fill-rule="evenodd"/>
<ellipse cx="784.6" cy="661.4" rx="8" ry="6.4" fill="#e8edf2"/>
<circle cx="780.6" cy="659.6" r="1.4" fill="#e23b2e" />
<circle cx="784" cy="657.8" r="1.4" fill="#f5b400" />
<circle cx="787.6" cy="658.8" r="1.4" fill="#2f9e44" />
<circle cx="781" cy="663.4" r="1.4" fill="#2d6fd6" />
<circle cx="786.6" cy="664.2" r="1.8" fill="#1d2023" />
<path d="M786.4,664.6 l5.600,-11.600 l1.6,0.8 l-5.400,11.600 z" fill="#c98a3c" />
<path d="M792,653 l1,-2.400 l1.200,0.600 l-0.600,2.600 z" fill="#e8a33a" />
<circle cx="813.5" cy="660.4" r="8" fill="#6e3fb8" />
<path d="M813.5,655.2 c-3,0 -5.400,2.400 -5.400,5.400 c0,2.400 1.500,4.400 3.700,5.100 v-2.100 c-1.500,0.300 -1.900,-0.700 -1.900,-0.700 c-0.300,-0.600 -0.700,-0.900 -0.700,-0.900 c0.800,-0.100 1.300,0.600 1.300,0.600 c0.600,0.900 1.300,0.600 1.500,0.500 c0,-0.400 0.200,-0.700 0.400,-0.900 c-1.700,-0.200 -2.700,-1 -2.700,-2.900 c0,-0.800 0.300,-1.400 0.700,-1.900 c-0.100,-0.200 -0.300,-1 0.100,-1.900 c0,0 0.600,-0.200 1.900,0.700 c1,-0.300 2.200,-0.300 3.200,0 c1.300,-0.900 1.900,-0.700 1.900,-0.700 c0.400,0.900 0.200,1.700 0.100,1.900 c0.400,0.500 0.700,1.100 0.700,1.900 c0,1.900 -1,2.700 -2.700,2.900 c0.300,0.200 0.500,0.700 0.500,1.400 v2.900 c2.200,-0.700 3.700,-2.700 3.700,-5.100 c0,-3 -2.400,-5.400 -5.400,-5.400 z" fill="#fff" />
<rect x="829.7" y="645" width="26.3" height="30" fill="#3b3e41" />
<circle cx="844.6" cy="660.2" r="7.4" fill="#ed6c47" />
<path d="M844.6,660.2 L844.6,652.8 A7.4,7.4 0 0 1 852,660.2 z" fill="#ff8f6b" />
<path d="M844.6,660.2 h7.400 a7.400,7.400 0 0 1 -3,5.900 z" fill="#d35230" />
<rect x="835.6" y="655.6" width="9.2" height="9.2" fill="#c43e1c" stroke="none" stroke-width="0" rx="1" />
<text x="840.2" y="663.2" font-size="7.6" fill="#fff" font-weight="bold" text-anchor="middle" >P</text>
<circle cx="875.5" cy="660" r="7.6" fill="#fff" />
<circle cx="875.5" cy="660" r="6.2" fill="#1e90d6" />
<text x="875.5" y="664" font-size="11" fill="#fff" font-weight="bold" text-anchor="middle" >?</text>
<circle cx="881" cy="665" r="2.8" fill="#f5b400" />
<text x="881" y="666.8" font-size="4.6" fill="#fff" font-weight="bold" text-anchor="middle" >i</text>
<rect x="401" y="673.2" width="21" height="1.8" fill="#7cb7e8" />
<rect x="604.2" y="673.2" width="20.699999999999932" height="1.8" fill="#7cb7e8" />
<rect x="632.62" y="673.2" width="20.699999999999932" height="1.8" fill="#7cb7e8" />
<rect x="661.0400000000001" y="673.2" width="20.699999999999932" height="1.8" fill="#7cb7e8" />
<rect x="689.46" y="673.2" width="20.699999999999932" height="1.8" fill="#7cb7e8" />
<rect x="717.8800000000001" y="673.2" width="20.699999999999818" height="1.8" fill="#7cb7e8" />
<rect x="746.3000000000001" y="673.2" width="20.699999999999932" height="1.8" fill="#7cb7e8" />
<rect x="774.72" y="673.2" width="20.699999999999932" height="1.8" fill="#7cb7e8" />
<rect x="803.1400000000001" y="673.2" width="20.699999999999818" height="1.8" fill="#7cb7e8" />
<rect x="829.7" y="673.2" width="26.3" height="1.8" fill="#8cc4f2" />
<circle cx="911" cy="657.6" r="3.6" fill="#f7c23c" />
<path d="M908.4,665 a3.400,3.400 0 0 1 0.600,-6.700 a4.600,4.600 0 0 1 8.600,-0.400 a3.600,3.600 0 0 1 0.600,7.100 z" fill="#dbeaf7" />
<text x="930" y="664.4" font-size="11.2" fill="#fff" textLength="20" lengthAdjust="spacingAndGlyphs" >36°F</text>
<path d="M964.6,662 l3.800,-3.800 l3.800,3.800" fill="none" stroke="#fff" stroke-width="1.1" />
<rect x="983.4" y="655.6" width="5.6" height="8.8" fill="none" stroke="#fff" stroke-width="1" rx="1.4" />
<path d="M989.4,658.400 l2.400,-1.200 v5.600 l-2.400,-1.200 M984.6,653.800 h3.400 M984.6,666.200 h3.400" fill="none" stroke="#fff" stroke-width="0.9" />
<path d="M999.6,663.600 a2.600,2.600 0 0 1 0.400,-5.100 a3.600,3.600 0 0 1 6.800,-0.400 a2.800,2.800 0 0 1 0.400,5.500 z" fill="#e9e9e9" />
<rect x="1016.6" y="654.6" width="10" height="8.6" fill="none" stroke="#fff" stroke-width="1" />
<path d="M1019,660.800 c0.400,-2.400 2,-3.600 4.400,-3.600 M1022.200,656 l1.400,1.200 l-1.400,1.200" fill="none" stroke="#fff" stroke-width="0.8" />
<circle cx="1026.4" cy="664.2" r="1.9" fill="#2f8fe8" />
<rect x="1037.6" y="657.2" width="9" height="5.2" fill="none" stroke="#fff" stroke-width="1" />
<path d="M1035,656 h3 v2.600 M1036,654.600 v1.400 M1037.600,654.600 v1.400" fill="none" stroke="#fff" stroke-width="0.8" />
<rect x="1039" y="658.6" width="4.4" height="2.4" fill="#fff" />
<path d="M1061.1999999999998,665 a2.4,2.4 0 0 1 2.4,-2.4" fill="none" stroke="#fff" stroke-width="1" opacity="1"/>
<path d="M1058.8,665 a4.8,4.8 0 0 1 4.8,-4.8" fill="none" stroke="#fff" stroke-width="1" opacity="0.85"/>
<path d="M1056.3999999999999,665 a7.2,7.2 0 0 1 7.2,-7.2" fill="none" stroke="#fff" stroke-width="1" opacity="0.55"/>
<path d="M1054.0,665 a9.6,9.6 0 0 1 9.6,-9.6" fill="none" stroke="#fff" stroke-width="1" opacity="0.45"/>
<path d="M1069.600,658.400 h2.200 l2.800,-2.600 v9.400 l-2.800,-2.600 h-2.200 z" fill="none" stroke="#fff" stroke-width="0.9" />
<path d="M1076.400,657.600 a3.600,3.600 0 0 1 0,5.600 M1078.200,655.800 a6,6 0 0 1 0,9.200" fill="none" stroke="#fff" stroke-width="0.9" />
<text x="1090.2" y="664" font-size="9.4" fill="#fff" textLength="16.3" lengthAdjust="spacingAndGlyphs" >ENG</text>
<text x="1118" y="656.2" font-size="9.4" fill="#fff" textLength="36" lengthAdjust="spacingAndGlyphs" >10:05 AM</text>
<text x="1114.7" y="669.6" font-size="9.4" fill="#fff" textLength="42.2" lengthAdjust="spacingAndGlyphs" >12/11/2021</text>
<path d="M1169.600,654.200 h11 v8.600 h-8 l-3,2.800 z" fill="#fff" />
<path d="M1171.400,656.600 h7.400 M1171.400,658.600 h7.400 M1171.400,660.600 h5" fill="none" stroke="#1d2023" stroke-width="0.7" />
<circle cx="1181.4" cy="665.4" r="3.9" fill="#1d2023" stroke="#fff" stroke-width="0.9" />
<text x="1181.4" y="668" font-size="6.6" fill="#fff" text-anchor="middle" >1</text>
</g>
</svg>
</div>
</body>
</html>
